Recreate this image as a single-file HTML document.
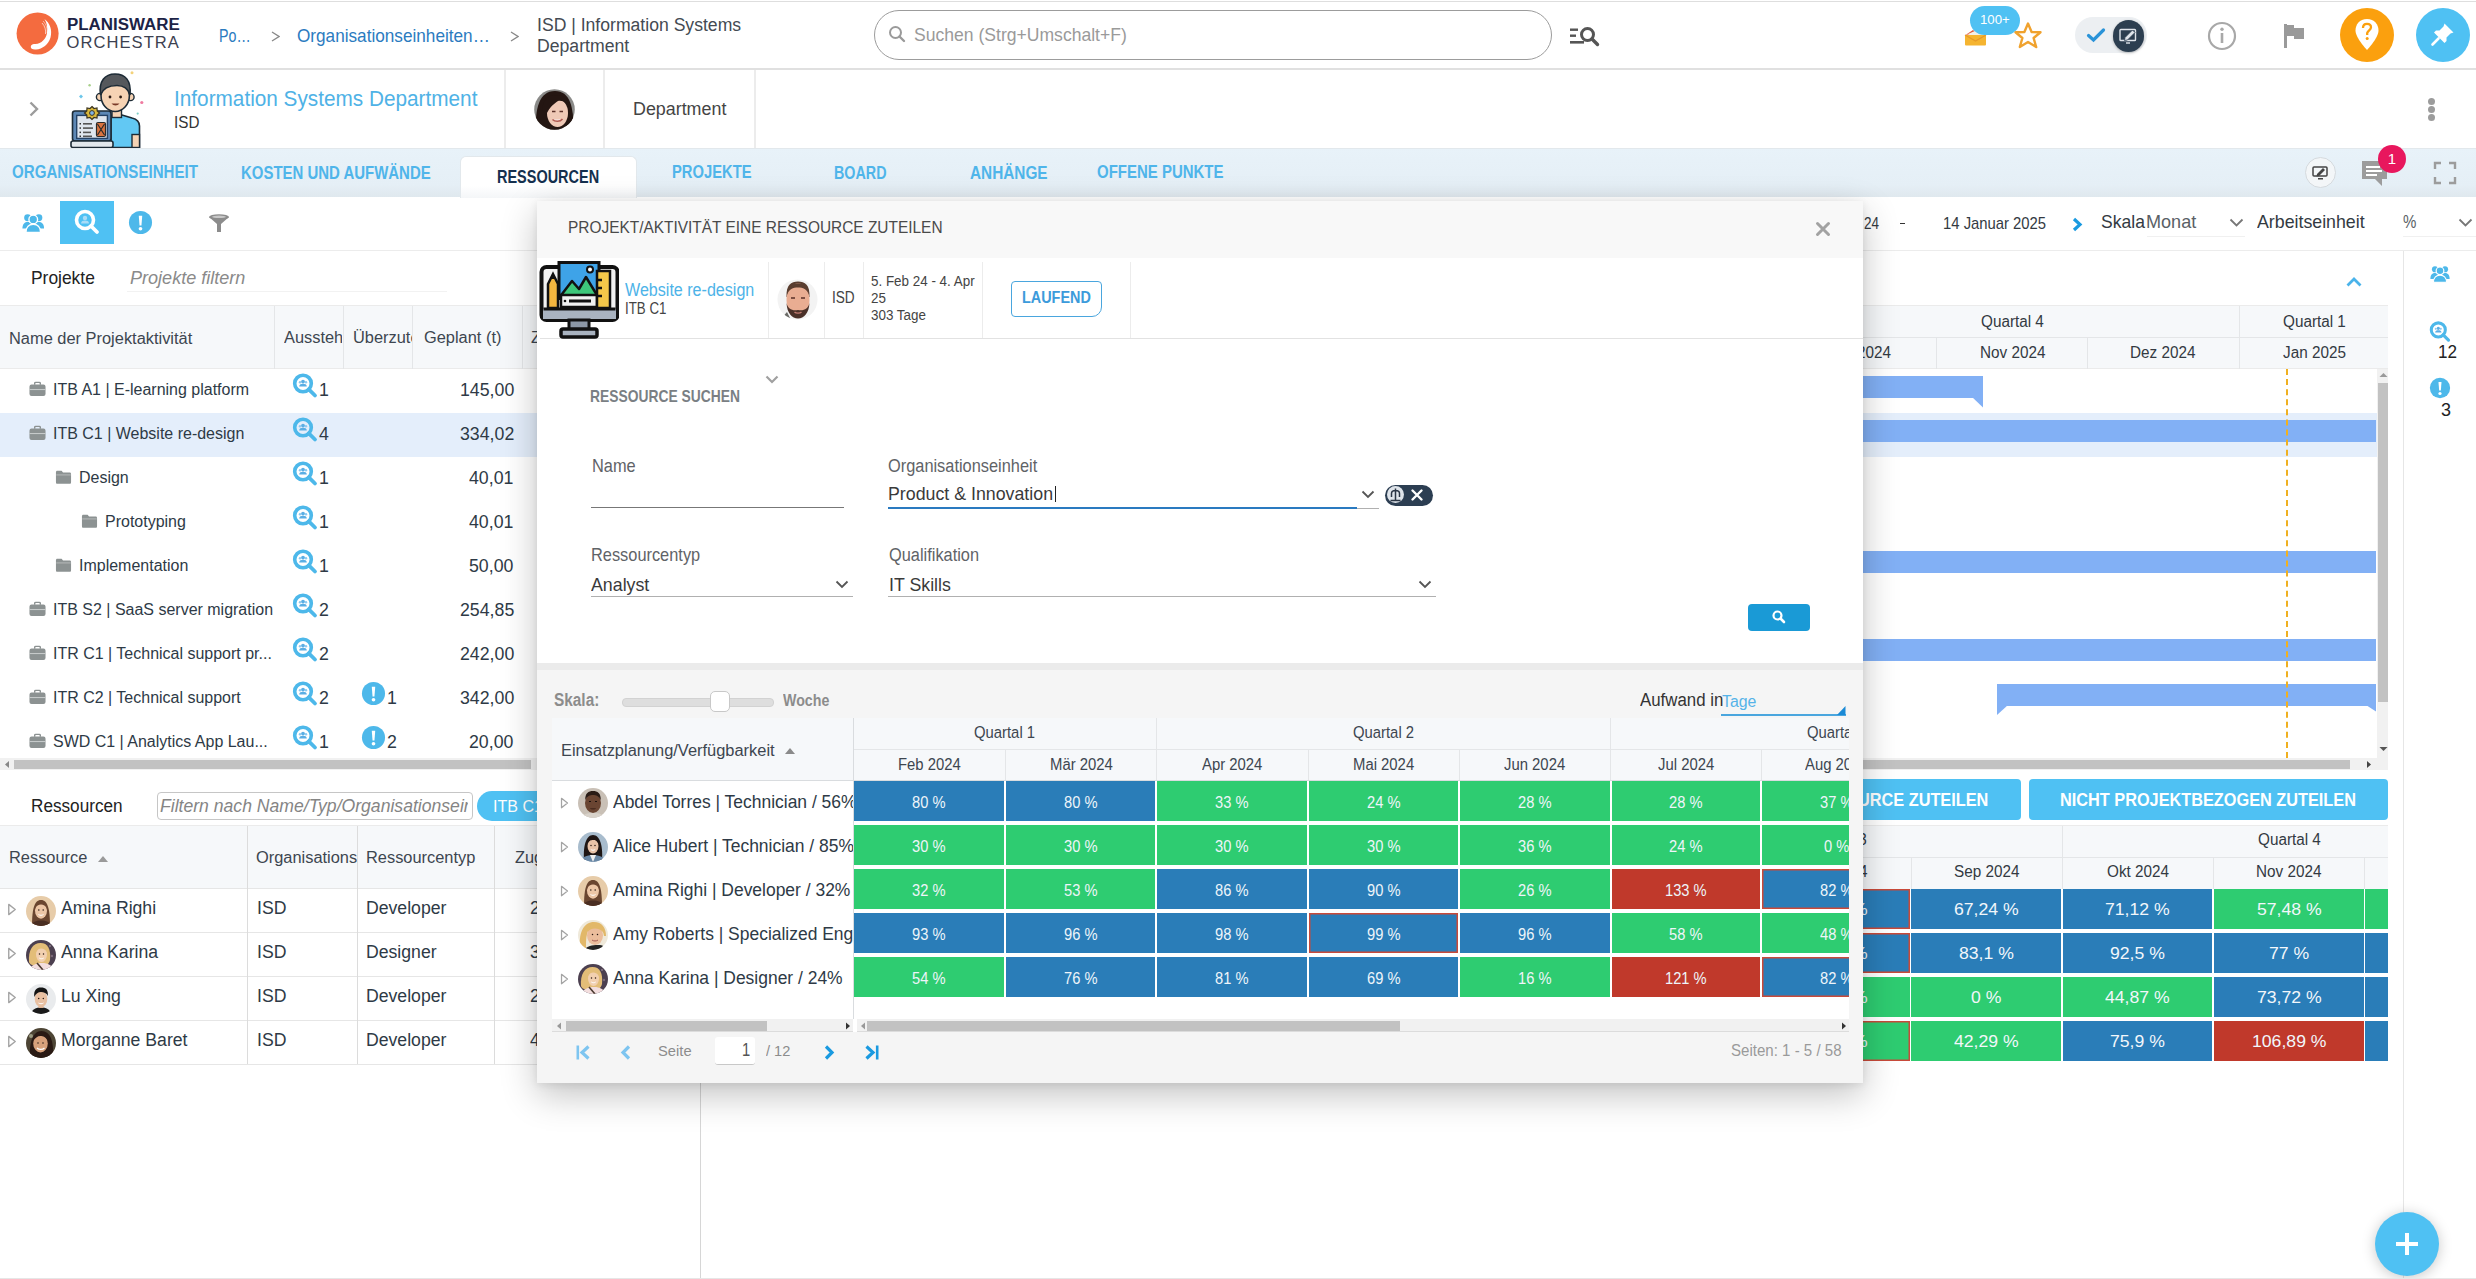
<!DOCTYPE html>
<html><head><meta charset="utf-8">
<style>
*{box-sizing:border-box;margin:0;padding:0}
html,body{width:2476px;height:1279px;overflow:hidden;background:#fff;font-family:"Liberation Sans",sans-serif;color:#333}
.a{position:absolute;white-space:nowrap;line-height:normal}
</style></head>
<body>
<div class="a" style="left:0;top:1px;width:2476px;height:1px;background:#dedede"></div>
<div class="a" style="left:0;top:68px;width:2476px;height:2px;background:#e0e0e0"></div>
<svg class="a" style="left:16px;top:12px" width="44" height="44" viewBox="0 0 44 44">
<circle cx="21.6" cy="21.5" r="21" fill="#f46b3f"/>
<path d="M28.5 7 C34 11 36.5 18 34.5 25.5 C32.5 32.5 26.5 37 20 37.5 C16.5 37.8 14.5 36.5 14.8 34.5 C15.1 32.6 17 32 19.5 32 C25.5 31.5 30 27 31 21 C31.8 15.5 30.8 10.5 28.5 7 Z" fill="#fff"/>
<path d="M26 11 C29 14 30 18 29.5 22" stroke="#fff" stroke-width="0.8" fill="none" opacity="0.8"/>
<path d="M27 9 C30.5 12.5 31.5 17 31 21" stroke="#fff" stroke-width="0.7" fill="none" opacity="0.7"/>
</svg>
<div class="a" style="left:66.6px;top:15.6px;font-size:15.80px;color:#1c2346;font-weight:bold;transform:scaleX(1.070);transform-origin:0 0;">PLANISWARE</div>
<div class="a" style="left:66.6px;top:32.7px;font-size:16.57px;color:#3c4150;letter-spacing:1.03px">ORCHESTRA</div>
<div class="a" style="left:218.7px;top:24.6px;font-size:18.84px;color:#2b7bbf;transform:scaleX(0.756);transform-origin:0 0;">Po…</div>
<svg class="a" style="left:271px;top:31px" width="9" height="11" viewBox="0 0 9 11"><path d="M1 1 L8 5.5 L1 10" stroke="#888" stroke-width="1.3" fill="none"/></svg>
<div class="a" style="left:297.0px;top:24.6px;font-size:18.84px;color:#2b7bbf;transform:scaleX(0.912);transform-origin:0 0;">Organisationseinheiten…</div>
<svg class="a" style="left:510px;top:31px" width="9" height="11" viewBox="0 0 9 11"><path d="M1 1 L8 5.5 L1 10" stroke="#888" stroke-width="1.3" fill="none"/></svg>
<div class="a" style="left:536.8px;top:14.7px;font-size:17.54px;color:#444a52;transform:scaleX(1.004);transform-origin:0 0;">ISD | Information Systems</div>
<div class="a" style="left:536.8px;top:35.7px;font-size:17.54px;color:#444a52;transform:scaleX(1.006);transform-origin:0 0;">Department</div>
<div class="a" style="left:874px;top:10px;width:678px;height:50px;border:1.5px solid #9c9c9c;border-radius:25px"></div>
<svg class="a" style="left:887px;top:24px" width="20" height="20" viewBox="0 0 20 20"><circle cx="8.5" cy="8.5" r="5.5" stroke="#9a9a9a" stroke-width="2" fill="none"/><path d="M12.5 12.5 L17 17" stroke="#9a9a9a" stroke-width="2.4" stroke-linecap="round"/></svg>
<div class="a" style="left:914.3px;top:23.9px;font-size:18.84px;color:#9a9a9a;transform:scaleX(0.933);transform-origin:0 0;">Suchen (Strg+Umschalt+F)</div>
<svg class="a" style="left:1568px;top:24px" width="34" height="24" viewBox="0 0 34 24"><rect x="2" y="4.5" width="8" height="2.4" fill="#555"/><rect x="2" y="10.5" width="6" height="2.4" fill="#555"/><rect x="2" y="17" width="14" height="2.6" fill="#555"/><circle cx="19.5" cy="10.5" r="6" stroke="#555" stroke-width="3" fill="none"/><path d="M24 15 L29.5 20.5" stroke="#555" stroke-width="3.4" stroke-linecap="round"/></svg>
<svg class="a" style="left:1964px;top:28px" width="24" height="19" viewBox="0 0 24 19"><path d="M1.5 7 L9 2 L13 5 Z" fill="#e0573a"/><path d="M4 6 L12 2.5 L18 6 L11 10 Z" fill="#f4efe6"/><rect x="1" y="7" width="21" height="10.5" rx="1" fill="#f5b430"/><path d="M1 7 L11.5 13 L22 7" stroke="#e79a28" stroke-width="1.2" fill="none"/></svg>
<div class="a" style="left:1970px;top:6px;width:50px;height:29px;border-radius:15px;background:#4fc1f3"></div>
<div class="a" style="left:1980.2px;top:12.4px;font-size:13.48px;color:#fff;transform:scaleX(0.980);transform-origin:0 0;">100+</div>
<svg class="a" style="left:2013px;top:21px" width="30" height="29" viewBox="0 0 30 29"><path d="M15 2.5 L18.6 11 L27.5 11.3 L20.6 17 L23.2 26 L15 21 L6.8 26 L9.4 17 L2.5 11.3 L11.4 11 Z" fill="none" stroke="#f0a22e" stroke-width="2.4" stroke-linejoin="round"/></svg>
<div class="a" style="left:2075px;top:17px;width:72px;height:36px;border-radius:18px;background:#eceff2"></div>
<svg class="a" style="left:2085px;top:26px" width="22" height="18" viewBox="0 0 22 18"><path d="M3.5 9.5 L8.5 14 L18.5 4" stroke="#2a93d8" stroke-width="3.2" fill="none" stroke-linecap="round"/></svg>
<div class="a" style="left:2112.5px;top:20px;width:31.5px;height:31.5px;border-radius:50%;background:#2c3e50;box-shadow:0 1px 3px rgba(0,0,0,0.25)"></div>
<svg class="a" style="left:2117px;top:24px" width="23" height="23" viewBox="0 0 23 23"><rect x="3" y="5.5" width="15.5" height="11" rx="0.8" fill="none" stroke="#dfe4ea" stroke-width="1.4"/><path d="M8 13.5 L15.5 6 L18 8.5 L10.5 16 L7.5 16.5 Z" fill="#dfe4ea" stroke="#2c3e50" stroke-width="0.8"/><rect x="9" y="18.3" width="4" height="1.4" fill="#dfe4ea"/></svg>
<svg class="a" style="left:2207px;top:21px" width="30" height="30" viewBox="0 0 30 30"><circle cx="15" cy="15" r="13" stroke="#a8a8a8" stroke-width="2.2" fill="none"/><rect x="13.7" y="12" width="2.6" height="10" fill="#a8a8a8"/><circle cx="15" cy="8.3" r="1.7" fill="#a8a8a8"/></svg>
<svg class="a" style="left:2281px;top:22px" width="26" height="28" viewBox="0 0 26 28"><rect x="3" y="2" width="3" height="24" fill="#9a9a9a"/><path d="M6 3 L13 3 L13 6 L23 6 L23 17 L13 17 L13 14 L6 14 Z" fill="#9a9a9a"/></svg>
<div class="a" style="left:2340px;top:8px;width:54px;height:54px;border-radius:50%;background:#fba00e"></div>
<svg class="a" style="left:2352px;top:17px" width="30" height="36" viewBox="0 0 30 36"><path d="M15 2 C7.5 2 3.5 7.5 3.5 13.5 C3.5 21 15 33 15 33 C15 33 26.5 21 26.5 13.5 C26.5 7.5 22.5 2 15 2 Z" fill="#fff"/><path d="M11 11 C11 8 13 6.8 15 6.8 C17.5 6.8 19 8.3 19 10.3 C19 12.8 15.8 13.5 15.2 16 L15.2 18" stroke="#fba00e" stroke-width="2.3" fill="none"/><circle cx="15.2" cy="21.5" r="1.5" fill="#fba00e"/></svg>
<div class="a" style="left:2416px;top:8px;width:54px;height:54px;border-radius:50%;background:#4fc1f3"></div>
<svg class="a" style="left:2429px;top:20px" width="28" height="28" viewBox="0 0 28 28"><path d="M15.5 3.5 L24.5 12.5 L21.5 13.5 L17.5 17.5 L17.5 21 L15.5 23 L5 12.5 L7 10.5 L10.5 10.5 L14.5 6.5 Z" fill="#fff"/><path d="M9.5 18.5 L3.5 24.5" stroke="#fff" stroke-width="2.6" stroke-linecap="round"/></svg>
<svg class="a" style="left:27px;top:100px" width="14" height="18" viewBox="0 0 14 18"><path d="M3.5 2.5 L10 9 L3.5 15.5" stroke="#9c9c9c" stroke-width="2.4" fill="none"/></svg>
<svg class="a" style="left:60px;top:68px" width="100" height="82" viewBox="0 0 100 82">
<circle cx="72" cy="4.8" r="1.5" fill="#f3d27a"/><circle cx="29.6" cy="17.3" r="1.2" fill="#a8d08a"/><path d="M19 28.5 L21 26.5 L23 28.5 L21 30.5 Z" fill="#6cc6ea"/><circle cx="81.8" cy="34.5" r="1.6" fill="#ef7ba0"/><circle cx="77.7" cy="45.6" r="1.1" fill="#7fd0c8"/>
<path d="M51 48 L52 47 L62 47 L72 50 C76 51 79.5 53 79.5 58 L79.5 79.5 L51 79.5 Z" fill="#62c8f3" stroke="#1d2b36" stroke-width="1.6"/>
<rect x="72" y="66.5" width="7.5" height="13" fill="#f6d3b4" stroke="#1d2b36" stroke-width="1.4"/>
<rect x="52" y="41" width="9.5" height="8.5" fill="#f6d3b4" stroke="#1d2b36" stroke-width="1.4"/>
<circle cx="40" cy="29" r="3.6" fill="#f6d3b4" stroke="#1d2b36" stroke-width="1.4"/><circle cx="70.5" cy="29" r="3.6" fill="#f6d3b4" stroke="#1d2b36" stroke-width="1.4"/>
<ellipse cx="55.2" cy="27.5" rx="14.2" ry="16" fill="#f6d3b4" stroke="#1d2b36" stroke-width="1.6"/>
<path d="M40.5 27 C38.5 13 45 6 55 6 C65 6 71.5 12 70 27 C68 20 64 17.5 57 17.5 C49 17.5 43 20 40.5 27 Z" fill="#55585c" stroke="#1d2b36" stroke-width="1.6"/>
<circle cx="50" cy="29" r="1.4" fill="#2a1a14"/><circle cx="60.6" cy="29" r="1.4" fill="#2a1a14"/>
<path d="M51.5 35.5 C53.5 38 57.5 38 59.5 35.5 Z" fill="#7a3a28"/>
<rect x="12.5" y="43" width="38.5" height="30" rx="2.5" fill="#5d88b6" stroke="#1d2b36" stroke-width="1.6"/>
<rect x="16.7" y="47.4" width="30.7" height="23" fill="#dfe6ee" stroke="#244266" stroke-width="1.4"/>
<rect x="19.5" y="55" width="1.5" height="1.5" fill="#333"/><rect x="23" y="55" width="9" height="1.6" fill="#555"/>
<rect x="19.5" y="59.3" width="1.5" height="1.5" fill="#333"/><rect x="23" y="59.3" width="10" height="1.6" fill="#555"/>
<rect x="19.5" y="63.6" width="1.5" height="1.5" fill="#333"/><rect x="23" y="63.6" width="8" height="1.6" fill="#555"/>
<rect x="19.5" y="67.5" width="1.5" height="1.5" fill="#333"/><rect x="23" y="67.5" width="9" height="1.6" fill="#555"/>
<rect x="36.5" y="54.5" width="9" height="14" rx="1.5" fill="#d9733f" stroke="#2a2a2a" stroke-width="1.2"/>
<path d="M37.5 56 L44.5 67 M44.5 56 L37.5 67" stroke="#2a2a2a" stroke-width="1.2"/>
<rect x="11" y="73" width="42" height="6.5" rx="2" fill="#e3e8ec" stroke="#1d2b36" stroke-width="1.6"/>
<path d="M32 38.5 L34 40.5 L37 40 L37.2 43 L39.5 45 L37.2 47 L37 50 L34 49.5 L32 51.5 L30 49.5 L27 50 L26.8 47 L24.5 45 L26.8 43 L27 40 L30 40.5 Z" fill="#d9b83c" stroke="#3a3420" stroke-width="1.2"/>
<circle cx="32" cy="45" r="2.4" fill="#7fb2e6" stroke="#3a3420" stroke-width="1"/>
</svg>
<div class="a" style="left:174.4px;top:85.6px;font-size:21.88px;color:#4fb2e6;transform:scaleX(0.949);transform-origin:0 0;">Information Systems Department</div>
<div class="a" style="left:174.4px;top:111.7px;font-size:17.39px;color:#333;transform:scaleX(0.877);transform-origin:0 0;">ISD</div>
<div class="a" style="left:504px;top:70px;width:2px;height:78px;background:#ececec"></div>
<div class="a" style="left:603px;top:70px;width:2px;height:78px;background:#ececec"></div>
<div class="a" style="left:754px;top:70px;width:2px;height:78px;background:#ececec"></div>
<svg class="a" style="left:534px;top:89px" width="41" height="41" viewBox="0 0 41 41"><defs><clipPath id="cf1"><circle cx="20.5" cy="20.5" r="20.3"/></clipPath></defs><g clip-path="url(#cf1)"><rect width="41" height="41" fill="#8a8a88"/>
<path d="M2 41 C1 20 5 2 21 2 C36 2 40 18 39 41 Z" fill="#241612"/>
<ellipse cx="23.5" cy="24" rx="10.5" ry="14" fill="#efc9b6"/>
<path d="M8 22 C9 10 14 6 22 6 C30 6 35 10 35 20 C33 14 29 11 24 12 C20 15 16 17 12 26 Z" fill="#241612"/>
<path d="M34 16 C36 24 35 34 30 41 L38 41 C40 30 39 20 34 16 Z" fill="#241612"/>
<path d="M18.5 30.5 C21 33 26 33 28.5 30" stroke="#b05a50" stroke-width="1.6" fill="#f6e0dc"/>
<path d="M18 22.5 L21.5 22.5 M25.5 22.5 L29 22.5" stroke="#5a3028" stroke-width="1.3"/>
</g></svg>
<div class="a" style="left:632.6px;top:98.0px;font-size:18.70px;color:#444;transform:scaleX(0.956);transform-origin:0 0;">Department</div>
<div class="a" style="left:2428px;top:98px;width:7px;height:7px;border-radius:50%;background:#9c9c9c"></div>
<div class="a" style="left:2428px;top:106px;width:7px;height:7px;border-radius:50%;background:#9c9c9c"></div>
<div class="a" style="left:2428px;top:114px;width:7px;height:7px;border-radius:50%;background:#9c9c9c"></div>
<div class="a" style="left:0;top:148px;width:2476px;height:49px;background:linear-gradient(#e8f2f9,#e5eff6 75%,#dfe8ee)"></div>
<div class="a" style="left:0;top:147.5px;width:2476px;height:1px;background:#e2e8ec"></div>
<div class="a" style="left:459.5px;top:155.5px;width:177px;height:42px;background:linear-gradient(#fff 70%,#f4f6f8);border:1px solid #e2e8ec;border-bottom:none;border-radius:6px 6px 0 0"></div>
<div class="a" style="left:12.4px;top:162.1px;font-size:17.97px;color:#4fb5ea;font-weight:bold;transform:scaleX(0.841);transform-origin:0 0;">ORGANISATIONSEINHEIT</div>
<div class="a" style="left:241.0px;top:163.4px;font-size:17.97px;color:#4fb5ea;font-weight:bold;transform:scaleX(0.833);transform-origin:0 0;">KOSTEN UND AUFWÄNDE</div>
<div class="a" style="left:496.8px;top:165.7px;font-size:18.26px;color:#15304e;font-weight:bold;transform:scaleX(0.793);transform-origin:0 0;">RESSOURCEN</div>
<div class="a" style="left:671.8px;top:162.4px;font-size:17.83px;color:#4fb5ea;font-weight:bold;transform:scaleX(0.827);transform-origin:0 0;">PROJEKTE</div>
<div class="a" style="left:833.7px;top:163.2px;font-size:17.68px;color:#4fb5ea;font-weight:bold;transform:scaleX(0.810);transform-origin:0 0;">BOARD</div>
<div class="a" style="left:969.8px;top:163.2px;font-size:17.68px;color:#4fb5ea;font-weight:bold;transform:scaleX(0.868);transform-origin:0 0;">ANHÄNGE</div>
<div class="a" style="left:1096.6px;top:162.4px;font-size:17.83px;color:#4fb5ea;font-weight:bold;transform:scaleX(0.840);transform-origin:0 0;">OFFENE PUNKTE</div>
<div class="a" style="left:2305px;top:157px;width:31px;height:31px;border-radius:50%;background:#f3f6f8;border:1px solid #d5dade"></div>
<svg class="a" style="left:2310px;top:162px" width="21" height="21" viewBox="0 0 21 21"><rect x="3" y="5" width="14" height="9" rx="1" fill="none" stroke="#444" stroke-width="1.5"/><path d="M7 12 L13 6 L15 8 L9 14 L6.5 14.5 Z" fill="#444"/><rect x="8" y="16" width="5" height="1.5" fill="#444"/></svg>
<svg class="a" style="left:2360px;top:158px" width="30" height="30" viewBox="0 0 30 30"><path d="M2 3 L27 3 L27 21 L22 21 L22 28 L15 21 L2 21 Z" fill="#9c9c9c"/><rect x="6" y="8" width="14" height="2" fill="#fff"/><rect x="6" y="12" width="16" height="2" fill="#fff"/><rect x="6" y="16" width="11" height="2" fill="#fff"/></svg>
<div class="a" style="left:2378px;top:145px;width:28px;height:28px;border-radius:50%;background:#e8175d;color:#fff;font-size:15px;line-height:28px;text-align:center">1</div>
<svg class="a" style="left:2433px;top:161px" width="24" height="24" viewBox="0 0 24 24"><path d="M2 8 L2 2 L8 2 M16 2 L22 2 L22 8 M22 16 L22 22 L16 22 M8 22 L2 22 L2 16" stroke="#9c9c9c" stroke-width="2.4" fill="none"/></svg>
<svg width="0" height="0" style="position:absolute">
<defs>
<symbol id="sp" viewBox="0 0 26 26"><circle cx="11" cy="10.5" r="8.3" stroke="#4db8ea" stroke-width="3.6" fill="none"/><path d="M16.8 16.3 L23 22.5" stroke="#4db8ea" stroke-width="3.8" stroke-linecap="round"/><circle cx="11" cy="8.6" r="1.9" fill="#5aaee4"/><path d="M7.2 13.6 C7.2 11.4 9 10.8 11 10.8 C13 10.8 14.8 11.4 14.8 13.6 Z" fill="#5aaee4"/><circle cx="8" cy="9.3" r="1.2" fill="#8ccaf0"/><circle cx="14" cy="9.3" r="1.2" fill="#8ccaf0"/></symbol>
<symbol id="ex" viewBox="0 0 26 26"><circle cx="13" cy="13" r="12" fill="#4db8ea"/><path d="M11.2 6 L14.8 6 L14 16 L12 16 Z" fill="#fff"/><circle cx="13" cy="19.5" r="1.9" fill="#fff"/></symbol>
<symbol id="bc" viewBox="0 0 18 16"><path d="M6 3.5 L6 2 C6 1.2 6.5 0.8 7.2 0.8 L10.8 0.8 C11.5 0.8 12 1.2 12 2 L12 3.5" stroke="#8c9292" stroke-width="1.5" fill="none"/><rect x="0.5" y="3.3" width="17" height="12.2" rx="2.2" fill="#8c9292"/><path d="M0.5 8.6 L17.5 8.6" stroke="#cfd2d2" stroke-width="1"/></symbol>
<symbol id="fd" viewBox="0 0 18 16"><path d="M1 3 C1 2 1.5 1.3 2.5 1.3 L7 1.3 L8.5 3.3 L15.5 3.3 C16.5 3.3 17 4 17 5 L17 13.5 C17 14.7 16.5 15.2 15.5 15.2 L2.5 15.2 C1.5 15.2 1 14.7 1 13.5 Z" fill="#8c9292"/><path d="M1.3 5.8 L16.7 5.8" stroke="#b9bdbd" stroke-width="1"/></symbol>
<symbol id="ppl" viewBox="0 0 26 24"><circle cx="6.5" cy="6.5" r="4" fill="#4db8ea"/><circle cx="19.5" cy="6.5" r="4" fill="#4db8ea"/><path d="M0.5 19 C0.5 13.5 3.5 11.5 6.5 11.5 C9.5 11.5 12 13 12 17 L12 19 Z" fill="#4db8ea"/><path d="M25.5 19 C25.5 13.5 22.5 11.5 19.5 11.5 C16.5 11.5 14 13 14 17 L14 19 Z" fill="#4db8ea"/><path d="M4.5 23.5 C4.5 17 8.5 14 13 14 C17.5 14 21.5 17 21.5 23.5 Z" fill="#4db8ea" stroke="#fff" stroke-width="1.6"/><circle cx="13" cy="8.5" r="5" fill="#4db8ea" stroke="#fff" stroke-width="1.6"/></symbol>
<symbol id="tri" viewBox="0 0 10 14"><path d="M1.5 1.5 L8.5 7 L1.5 12.5 Z" fill="none" stroke="#a4a4a4" stroke-width="1.5" stroke-linejoin="round"/></symbol>
</defs></svg>
<svg class="a" style="left:22px;top:212px" width="22.5" height="21" viewBox="0 0 26 24"><use href="#ppl"/></svg>
<div class="a" style="left:60px;top:201px;width:54px;height:43px;background:#4fc1f3"></div>
<svg class="a" style="left:73px;top:208px" width="28" height="28" viewBox="0 0 28 28"><circle cx="12" cy="12" r="8.5" stroke="#fff" stroke-width="3.6" fill="none"/><path d="M18 18 L24 24" stroke="#fff" stroke-width="3.8" stroke-linecap="round"/><circle cx="12" cy="10" r="2.2" fill="#a9dcf7"/><path d="M8 15.5 C8 13 10 12.4 12 12.4 C14 12.4 16 13 16 15.5 Z" fill="#a9dcf7"/></svg>
<svg class="a" style="left:128px;top:210px" width="25" height="25"><use href="#ex"/></svg>
<svg class="a" style="left:207px;top:213px" width="24" height="20" viewBox="0 0 24 20"><ellipse cx="12" cy="4" rx="10" ry="2.8" fill="#8c8c8c"/><path d="M2 4 L10 11 L10 19 L14 19 L14 11 L22 4 Z" fill="#8c8c8c"/><ellipse cx="12" cy="3.8" rx="7" ry="1.2" fill="#c8c8c8"/></svg>
<div class="a" style="left:0;top:250px;width:537px;height:1px;background:#ececec"></div>
<div class="a" style="left:30.5px;top:266.9px;font-size:18.55px;color:#222;transform:scaleX(0.939);transform-origin:0 0;">Projekte</div>
<div class="a" style="left:130.0px;top:266.9px;font-size:18.55px;color:#8a8a8a;font-style:italic;transform:scaleX(0.974);transform-origin:0 0;">Projekte filtern</div>
<div class="a" style="left:127px;top:291px;width:320px;height:1px;background:#f2f2f2"></div>
<div class="a" style="left:0;top:305px;width:537px;height:64px;background:#f6f8fa;border-top:1px solid #ebebeb;border-bottom:1px solid #ebebeb"></div>
<div class="a" style="left:9.0px;top:327.5px;font-size:17.25px;color:#3d4650;transform:scaleX(0.951);transform-origin:0 0;">Name der Projektaktivität</div>
<div class="a" style="left:283px;top:320px;width:59px;height:30px;overflow:hidden"><div class="a" style="left:0.5px;top:7.2px;font-size:17.25px;color:#3d4650;transform:scaleX(0.950);transform-origin:0 0;">Ausstehend</div></div>
<div class="a" style="left:352px;top:320px;width:60px;height:30px;overflow:hidden"><div class="a" style="left:0.6px;top:7.2px;font-size:17.25px;color:#3d4650;transform:scaleX(0.950);transform-origin:0 0;">Überzuteilen</div></div>
<div class="a" style="left:423.8px;top:327.2px;font-size:17.25px;color:#3d4650;transform:scaleX(0.950);transform-origin:0 0;">Geplant (t)</div>
<div class="a" style="left:531.0px;top:327.2px;font-size:17.25px;color:#3d4650;transform:scaleX(0.950);transform-origin:0 0;">Zugeteilt</div>
<div class="a" style="left:274px;top:306px;width:1px;height:63px;background:#e4e6e8"></div>
<div class="a" style="left:343px;top:306px;width:1px;height:63px;background:#e4e6e8"></div>
<div class="a" style="left:412px;top:306px;width:1px;height:63px;background:#e4e6e8"></div>
<div class="a" style="left:522px;top:306px;width:1px;height:63px;background:#e4e6e8"></div>
<svg class="a" style="left:28.5px;top:381px" width="17" height="16" viewBox="0 0 18 16"><use href="#bc"/></svg>
<div class="a" style="left:53.3px;top:379.4px;font-size:17.30px;color:#2e3a46;transform:scaleX(0.925);transform-origin:0 0;">ITB A1 | E-learning platform</div>
<svg class="a" style="left:292px;top:373px" width="26" height="26"><use href="#sp"/></svg>
<div class="a" style="left:318.7px;top:379.3px;font-size:18.30px;color:#2e3a46;transform:scaleX(0.970);transform-origin:0 0;">1</div>
<div class="a" style="left:459.5px;top:379.3px;font-size:18.30px;color:#2e3a46;transform:scaleX(0.970);transform-origin:0 0;">145,00</div>
<div class="a" style="left:0;top:412.5px;width:537px;height:44px;background:#e4eefb"></div>
<svg class="a" style="left:28.5px;top:425px" width="17" height="16" viewBox="0 0 18 16"><use href="#bc"/></svg>
<div class="a" style="left:53.3px;top:423.4px;font-size:17.30px;color:#2e3a46;transform:scaleX(0.925);transform-origin:0 0;">ITB C1 | Website re-design</div>
<svg class="a" style="left:292px;top:417px" width="26" height="26"><use href="#sp"/></svg>
<div class="a" style="left:318.7px;top:423.3px;font-size:18.30px;color:#2e3a46;transform:scaleX(0.970);transform-origin:0 0;">4</div>
<div class="a" style="left:459.5px;top:423.3px;font-size:18.30px;color:#2e3a46;transform:scaleX(0.970);transform-origin:0 0;">334,02</div>
<svg class="a" style="left:54.5px;top:469px" width="17" height="16" viewBox="0 0 18 16"><use href="#fd"/></svg>
<div class="a" style="left:79.3px;top:467.4px;font-size:17.30px;color:#2e3a46;transform:scaleX(0.925);transform-origin:0 0;">Design</div>
<svg class="a" style="left:292px;top:461px" width="26" height="26"><use href="#sp"/></svg>
<div class="a" style="left:318.7px;top:467.3px;font-size:18.30px;color:#2e3a46;transform:scaleX(0.970);transform-origin:0 0;">1</div>
<div class="a" style="left:469.3px;top:467.3px;font-size:18.30px;color:#2e3a46;transform:scaleX(0.970);transform-origin:0 0;">40,01</div>
<svg class="a" style="left:80.5px;top:513px" width="17" height="16" viewBox="0 0 18 16"><use href="#fd"/></svg>
<div class="a" style="left:105.3px;top:511.4px;font-size:17.30px;color:#2e3a46;transform:scaleX(0.925);transform-origin:0 0;">Prototyping</div>
<svg class="a" style="left:292px;top:505px" width="26" height="26"><use href="#sp"/></svg>
<div class="a" style="left:318.7px;top:511.3px;font-size:18.30px;color:#2e3a46;transform:scaleX(0.970);transform-origin:0 0;">1</div>
<div class="a" style="left:469.3px;top:511.3px;font-size:18.30px;color:#2e3a46;transform:scaleX(0.970);transform-origin:0 0;">40,01</div>
<svg class="a" style="left:54.5px;top:557px" width="17" height="16" viewBox="0 0 18 16"><use href="#fd"/></svg>
<div class="a" style="left:79.3px;top:555.4px;font-size:17.30px;color:#2e3a46;transform:scaleX(0.925);transform-origin:0 0;">Implementation</div>
<svg class="a" style="left:292px;top:549px" width="26" height="26"><use href="#sp"/></svg>
<div class="a" style="left:318.7px;top:555.3px;font-size:18.30px;color:#2e3a46;transform:scaleX(0.970);transform-origin:0 0;">1</div>
<div class="a" style="left:469.3px;top:555.3px;font-size:18.30px;color:#2e3a46;transform:scaleX(0.970);transform-origin:0 0;">50,00</div>
<svg class="a" style="left:28.5px;top:601px" width="17" height="16" viewBox="0 0 18 16"><use href="#bc"/></svg>
<div class="a" style="left:53.3px;top:599.4px;font-size:17.30px;color:#2e3a46;transform:scaleX(0.925);transform-origin:0 0;">ITB S2 | SaaS server migration</div>
<svg class="a" style="left:292px;top:593px" width="26" height="26"><use href="#sp"/></svg>
<div class="a" style="left:318.7px;top:599.3px;font-size:18.30px;color:#2e3a46;transform:scaleX(0.970);transform-origin:0 0;">2</div>
<div class="a" style="left:459.5px;top:599.3px;font-size:18.30px;color:#2e3a46;transform:scaleX(0.970);transform-origin:0 0;">254,85</div>
<svg class="a" style="left:28.5px;top:645px" width="17" height="16" viewBox="0 0 18 16"><use href="#bc"/></svg>
<div class="a" style="left:53.3px;top:643.4px;font-size:17.30px;color:#2e3a46;transform:scaleX(0.925);transform-origin:0 0;">ITR C1 | Technical support pr...</div>
<svg class="a" style="left:292px;top:637px" width="26" height="26"><use href="#sp"/></svg>
<div class="a" style="left:318.7px;top:643.3px;font-size:18.30px;color:#2e3a46;transform:scaleX(0.970);transform-origin:0 0;">2</div>
<div class="a" style="left:459.5px;top:643.3px;font-size:18.30px;color:#2e3a46;transform:scaleX(0.970);transform-origin:0 0;">242,00</div>
<svg class="a" style="left:28.5px;top:689px" width="17" height="16" viewBox="0 0 18 16"><use href="#bc"/></svg>
<div class="a" style="left:53.3px;top:687.4px;font-size:17.30px;color:#2e3a46;transform:scaleX(0.925);transform-origin:0 0;">ITR C2 | Technical support</div>
<svg class="a" style="left:292px;top:681px" width="26" height="26"><use href="#sp"/></svg>
<div class="a" style="left:318.7px;top:687.3px;font-size:18.30px;color:#2e3a46;transform:scaleX(0.970);transform-origin:0 0;">2</div>
<svg class="a" style="left:360.5px;top:681px" width="25" height="25" viewBox="0 0 26 26"><use href="#ex"/></svg>
<div class="a" style="left:387.0px;top:687.3px;font-size:18.30px;color:#2e3a46;transform:scaleX(0.970);transform-origin:0 0;">1</div>
<div class="a" style="left:459.5px;top:687.3px;font-size:18.30px;color:#2e3a46;transform:scaleX(0.970);transform-origin:0 0;">342,00</div>
<svg class="a" style="left:28.5px;top:733px" width="17" height="16" viewBox="0 0 18 16"><use href="#bc"/></svg>
<div class="a" style="left:53.3px;top:731.4px;font-size:17.30px;color:#2e3a46;transform:scaleX(0.925);transform-origin:0 0;">SWD C1 | Analytics App Lau...</div>
<svg class="a" style="left:292px;top:725px" width="26" height="26"><use href="#sp"/></svg>
<div class="a" style="left:318.7px;top:731.3px;font-size:18.30px;color:#2e3a46;transform:scaleX(0.970);transform-origin:0 0;">1</div>
<svg class="a" style="left:360.5px;top:725px" width="25" height="25" viewBox="0 0 26 26"><use href="#ex"/></svg>
<div class="a" style="left:387.0px;top:731.3px;font-size:18.30px;color:#2e3a46;transform:scaleX(0.970);transform-origin:0 0;">2</div>
<div class="a" style="left:469.3px;top:731.3px;font-size:18.30px;color:#2e3a46;transform:scaleX(0.970);transform-origin:0 0;">20,00</div>
<div class="a" style="left:0;top:758px;width:537px;height:12px;background:#f1f1f1"></div>
<div class="a" style="left:14px;top:759.5px;width:517px;height:9px;background:#c2c2c2"></div>
<svg class="a" style="left:3px;top:760px" width="8" height="9"><path d="M6 1 L2 4.5 L6 8 Z" fill="#888"/></svg>
<div class="a" style="left:30.5px;top:795.9px;font-size:17.68px;color:#222;transform:scaleX(0.971);transform-origin:0 0;">Ressourcen</div>
<div class="a" style="left:157px;top:792px;width:316px;height:28px;border:1px solid #c6c6c6;border-radius:4px;background:#fff"></div>
<div class="a" style="left:158px;top:793px;width:310px;height:26px;overflow:hidden"><div class="a" style="left:2.0px;top:3.0px;font-size:17.60px;color:#858585;font-style:italic;">Filtern nach Name/Typ/Organisationseinheit</div></div>
<div class="a" style="left:477px;top:791px;width:90px;height:30px;border-radius:15px;background:#4fc1f3"></div>
<div class="a" style="left:493.0px;top:796.2px;font-size:17.30px;color:#fff;transform:scaleX(0.930);transform-origin:0 0;">ITB C1</div>
<div class="a" style="left:0;top:825px;width:537px;height:64px;background:#f6f8fa;border-top:1px solid #ebebeb;border-bottom:1px solid #e6e6e6"></div>
<div class="a" style="left:9.0px;top:847.4px;font-size:17.25px;color:#3d4650;transform:scaleX(0.950);transform-origin:0 0;">Ressource</div>
<svg class="a" style="left:97px;top:855px" width="12" height="8"><path d="M1 7 L6 1 L11 7 Z" fill="#9a9a9a"/></svg>
<div class="a" style="left:250px;top:840px;width:107px;height:30px;overflow:hidden"><div class="a" style="left:6.0px;top:7.4px;font-size:17.25px;color:#3d4650;transform:scaleX(0.950);transform-origin:0 0;">Organisationseinheit</div></div>
<div class="a" style="left:366.2px;top:847.4px;font-size:17.25px;color:#3d4650;transform:scaleX(0.950);transform-origin:0 0;">Ressourcentyp</div>
<div class="a" style="left:514.6px;top:847.4px;font-size:17.25px;color:#3d4650;transform:scaleX(0.950);transform-origin:0 0;">Zugeteilt</div>
<div class="a" style="left:0;top:932px;width:537px;height:1px;background:#e6e6e6"></div>
<svg class="a" style="left:7px;top:902.7px" width="10" height="13" viewBox="0 0 10 14"><use href="#tri"/></svg>
<svg class="a" style="left:26px;top:896.4px" width="30" height="30" viewBox="0 0 30 30"><defs><clipPath id="av26_896"><circle cx="15" cy="15" r="15"/></clipPath></defs><g clip-path="url(#av26_896)"><rect width="30" height="30" fill="#e7cca9"/><path d="M6 30 C6 14 8 4 15 4 C22 4 24 14 24 30 Z" fill="#6a4630"/><path d="M5 30 C6 26 10 24.5 15 24.5 C20 24.5 24 26 25 30 Z" fill="#4a2e22"/><ellipse cx="15" cy="14.5" rx="6" ry="8.3" fill="#ecc6a6"/><path d="M9 13 C9 7 11.5 5.5 15 5.5 C18.5 5.5 21 7 21 13 C19.5 9.5 17.5 8.5 15 8.5 C12.5 8.5 10.5 9.5 9 13 Z" fill="#6a4630"/><path d="M12.5 18.5 C14 19.6 16 19.6 17.5 18.5" stroke="#fff" stroke-width="1" fill="none"/><circle cx="12.8" cy="14" r="0.75" fill="#2a1a14"/><circle cx="17.2" cy="14" r="0.75" fill="#2a1a14"/></g></svg>
<div class="a" style="left:61.0px;top:897.6px;font-size:18.00px;color:#2e3a46;transform:scaleX(0.980);transform-origin:0 0;">Amina Righi</div>
<div class="a" style="left:256.7px;top:898.2px;font-size:18.00px;color:#2e3a46;transform:scaleX(0.980);transform-origin:0 0;">ISD</div>
<div class="a" style="left:366.2px;top:898.2px;font-size:18.00px;color:#2e3a46;transform:scaleX(0.980);transform-origin:0 0;">Developer</div>
<div class="a" style="left:529.5px;top:898.2px;font-size:18.00px;color:#2e3a46;transform:scaleX(0.980);transform-origin:0 0;">2</div>
<div class="a" style="left:0;top:976px;width:537px;height:1px;background:#e6e6e6"></div>
<svg class="a" style="left:7px;top:946.7px" width="10" height="13" viewBox="0 0 10 14"><use href="#tri"/></svg>
<svg class="a" style="left:26px;top:940.4px" width="30" height="30" viewBox="0 0 30 30"><defs><clipPath id="av26_940"><circle cx="15" cy="15" r="15"/></clipPath></defs><g clip-path="url(#av26_940)"><rect width="30" height="30" fill="#4c4050"/><circle cx="24" cy="6" r="1" fill="#8a7a8a"/><circle cx="26" cy="16" r="1.2" fill="#7a6a7a"/><path d="M3 22 C2 10 7 3 14.5 3 C22 3 25 9 24 20 C23 24 20 26 16 26 C10 26 4 26 3 22 Z" fill="#e3bd78"/><path d="M4 30 C5 25 10 23 16 23 C22 23 26 25 27 30 Z" fill="#f3dede"/><path d="M11 23 L17 30" stroke="#4a3a30" stroke-width="1.6"/><ellipse cx="15.5" cy="14.5" rx="5.5" ry="7.5" fill="#f2d0b0"/><path d="M10 12 C10 7 12 6 15.5 6 C19 6 21 8 21 12 C19 9 17 8.5 15.5 8.5 C13 8.5 11.5 9.5 10 12 Z" fill="#e3bd78"/><path d="M13.3 18 C14.5 19 16.5 19 17.7 18" stroke="#fff" stroke-width="1" fill="none"/><circle cx="13.5" cy="14" r="0.75" fill="#2a1a14"/><circle cx="17.5" cy="14" r="0.75" fill="#2a1a14"/></g></svg>
<div class="a" style="left:61.0px;top:941.6px;font-size:18.00px;color:#2e3a46;transform:scaleX(0.980);transform-origin:0 0;">Anna Karina</div>
<div class="a" style="left:256.7px;top:942.2px;font-size:18.00px;color:#2e3a46;transform:scaleX(0.980);transform-origin:0 0;">ISD</div>
<div class="a" style="left:366.2px;top:942.2px;font-size:18.00px;color:#2e3a46;transform:scaleX(0.980);transform-origin:0 0;">Designer</div>
<div class="a" style="left:529.5px;top:942.2px;font-size:18.00px;color:#2e3a46;transform:scaleX(0.980);transform-origin:0 0;">3</div>
<div class="a" style="left:0;top:1020px;width:537px;height:1px;background:#e6e6e6"></div>
<svg class="a" style="left:7px;top:990.7px" width="10" height="13" viewBox="0 0 10 14"><use href="#tri"/></svg>
<svg class="a" style="left:26px;top:984.4px" width="30" height="30" viewBox="0 0 30 30"><defs><clipPath id="av26_984"><circle cx="15" cy="15" r="15"/></clipPath></defs><g clip-path="url(#av26_984)"><rect width="30" height="30" fill="#e9ebed"/><path d="M5 30 C6 25 10 23.5 15 23.5 C20 23.5 24 25 25 30 Z" fill="#1a1a1a"/><rect x="12.5" y="19" width="5" height="5" fill="#dfb596"/><ellipse cx="15" cy="15" rx="6.3" ry="8" fill="#e8c0a2"/><path d="M8.3 13 C7.5 6 10.5 3.5 15 3.5 C19.5 3.5 22.5 5.5 21.8 12 C20.5 9 18 8 15 8 C12 8 10 9.5 8.3 13 Z" fill="#141414"/><path d="M12.5 19 C14 20 16 20 17.5 19" stroke="#fff" stroke-width="1" fill="none"/><circle cx="12.7" cy="14.5" r="0.75" fill="#2a1a14"/><circle cx="17.3" cy="14.5" r="0.75" fill="#2a1a14"/></g></svg>
<div class="a" style="left:61.0px;top:985.6px;font-size:18.00px;color:#2e3a46;transform:scaleX(0.980);transform-origin:0 0;">Lu Xing</div>
<div class="a" style="left:256.7px;top:986.2px;font-size:18.00px;color:#2e3a46;transform:scaleX(0.980);transform-origin:0 0;">ISD</div>
<div class="a" style="left:366.2px;top:986.2px;font-size:18.00px;color:#2e3a46;transform:scaleX(0.980);transform-origin:0 0;">Developer</div>
<div class="a" style="left:529.5px;top:986.2px;font-size:18.00px;color:#2e3a46;transform:scaleX(0.980);transform-origin:0 0;">2</div>
<div class="a" style="left:0;top:1064px;width:537px;height:1px;background:#e6e6e6"></div>
<svg class="a" style="left:7px;top:1034.7px" width="10" height="13" viewBox="0 0 10 14"><use href="#tri"/></svg>
<svg class="a" style="left:26px;top:1028.4px" width="30" height="30" viewBox="0 0 30 30"><defs><clipPath id="av26_1028"><circle cx="15" cy="15" r="15"/></clipPath></defs><g clip-path="url(#av26_1028)"><rect width="30" height="30" fill="#4d4535"/><path d="M4 30 C3 14 7 3 15.5 3 C24 3 28 12 27 30 Z" fill="#2a1a14"/><ellipse cx="14.5" cy="15.5" rx="7.3" ry="9" fill="#d8a27c"/><path d="M7 13 C8 6 11 4.5 15 4.5 C20 4.5 23 7 22 13 C20 9 17 8 14.5 8 C11.5 8 9 10 7 13 Z" fill="#2a1a14"/><path d="M11 20 C13 21.8 16.5 21.8 18.5 20" stroke="#fff" stroke-width="1.2" fill="none"/><circle cx="5" cy="8" r="2" fill="#9a9a80"/><circle cx="12" cy="15" r="0.75" fill="#2a1a14"/><circle cx="17" cy="15" r="0.75" fill="#2a1a14"/></g></svg>
<div class="a" style="left:61.0px;top:1029.6px;font-size:18.00px;color:#2e3a46;transform:scaleX(0.980);transform-origin:0 0;">Morganne Baret</div>
<div class="a" style="left:256.7px;top:1030.2px;font-size:18.00px;color:#2e3a46;transform:scaleX(0.980);transform-origin:0 0;">ISD</div>
<div class="a" style="left:366.2px;top:1030.2px;font-size:18.00px;color:#2e3a46;transform:scaleX(0.980);transform-origin:0 0;">Developer</div>
<div class="a" style="left:529.5px;top:1030.2px;font-size:18.00px;color:#2e3a46;transform:scaleX(0.980);transform-origin:0 0;">4</div>
<div class="a" style="left:247px;top:826px;width:1px;height:238px;background:#dcdcdc"></div>
<div class="a" style="left:357px;top:826px;width:1px;height:238px;background:#dcdcdc"></div>
<div class="a" style="left:494px;top:826px;width:1px;height:238px;background:#dcdcdc"></div>
<div class="a" style="left:700px;top:1064px;width:1px;height:215px;background:#d6d6d6"></div>
<div class="a" style="left:2403px;top:250px;width:1px;height:1029px;background:#e6e6e6"></div>
<div class="a" style="left:1863.7px;top:213.8px;font-size:16.96px;color:#333a42;transform:scaleX(0.797);transform-origin:0 0;">24</div>
<div class="a" style="left:1900px;top:222.5px;width:5px;height:1.6px;background:#333"></div>
<div class="a" style="left:1942.9px;top:213.8px;font-size:16.96px;color:#333a42;transform:scaleX(0.876);transform-origin:0 0;">14 Januar 2025</div>
<svg class="a" style="left:2071px;top:217px" width="13" height="15" viewBox="0 0 13 15"><path d="M3 2 L9 7.5 L3 13" stroke="#1a9ae0" stroke-width="3.2" fill="none"/></svg>
<div class="a" style="left:2100.9px;top:210.8px;font-size:18.84px;color:#333a42;transform:scaleX(0.932);transform-origin:0 0;">Skala</div>
<div class="a" style="left:2146.1px;top:210.8px;font-size:18.84px;color:#5a5f66;transform:scaleX(0.960);transform-origin:0 0;">Monat</div>
<div class="a" style="left:2147px;top:236px;width:98px;height:1px;background:#f0f0f0"></div>
<div class="a" style="left:2403px;top:236px;width:73px;height:1px;background:#f0f0f0"></div>
<svg class="a" style="left:2229px;top:218px" width="15" height="9" viewBox="0 0 15 9"><path d="M1.5 1.5 L7.5 7.5 L13.5 1.5" stroke="#777" stroke-width="1.8" fill="none"/></svg>
<div class="a" style="left:2257.4px;top:210.8px;font-size:18.84px;color:#333a42;transform:scaleX(0.943);transform-origin:0 0;">Arbeitseinheit</div>
<div class="a" style="left:2403.2px;top:210.8px;font-size:18.84px;color:#5a5f66;transform:scaleX(0.799);transform-origin:0 0;">%</div>
<svg class="a" style="left:2458px;top:218px" width="15" height="9" viewBox="0 0 15 9"><path d="M1.5 1.5 L7.5 7.5 L13.5 1.5" stroke="#777" stroke-width="1.8" fill="none"/></svg>
<div class="a" style="left:1863px;top:250px;width:613px;height:1px;background:#ececec"></div>
<svg class="a" style="left:2345px;top:275px" width="18" height="13" viewBox="0 0 18 13"><path d="M2.5 10.5 L9 4 L15.5 10.5" stroke="#4ab3ea" stroke-width="2.8" fill="none"/></svg>
<div class="a" style="left:1863px;top:305px;width:525px;height:64px;background:#f6f8fa;border-top:1px solid #ebebeb;border-bottom:1px solid #ebebeb"></div>
<div class="a" style="left:1863px;top:337px;width:525px;height:1px;background:#e4e6e8"></div>
<div class="a" style="left:2239px;top:306px;width:1px;height:63px;background:#e4e6e8"></div>
<div class="a" style="left:1936px;top:337px;width:1px;height:32px;background:#e4e6e8"></div>
<div class="a" style="left:2087px;top:337px;width:1px;height:32px;background:#e4e6e8"></div>
<div class="a" style="left:1980.8px;top:312.8px;font-size:16.00px;color:#333a42;transform:scaleX(0.955);transform-origin:0 0;">Quartal 4</div>
<div class="a" style="left:2283.0px;top:312.8px;font-size:16.00px;color:#333a42;transform:scaleX(0.955);transform-origin:0 0;">Quartal 1</div>
<div class="a" style="left:1828.5px;top:344.0px;font-size:16.00px;color:#333a42;transform:scaleX(0.955);transform-origin:0 0;">Okt 2024</div>
<div class="a" style="left:1979.5px;top:344.0px;font-size:16.00px;color:#333a42;transform:scaleX(0.955);transform-origin:0 0;">Nov 2024</div>
<div class="a" style="left:2130.4px;top:344.0px;font-size:16.00px;color:#333a42;transform:scaleX(0.955);transform-origin:0 0;">Dez 2024</div>
<div class="a" style="left:2283.3px;top:344.0px;font-size:16.00px;color:#333a42;transform:scaleX(0.955);transform-origin:0 0;">Jan 2025</div>
<div class="a" style="left:1863px;top:413px;width:514px;height:44px;background:#e4eefb"></div>
<div class="a" style="left:1800px;top:376px;width:183px;height:22px;background:#82b0f5"></div>
<svg class="a" style="left:1972px;top:397px" width="12" height="11"><path d="M0 0 L11 0 L11 10.5 Z" fill="#82b0f5"/></svg>
<div class="a" style="left:1800px;top:420px;width:576px;height:22px;background:#82b0f5"></div>
<div class="a" style="left:1800px;top:551px;width:576px;height:22px;background:#82b0f5"></div>
<div class="a" style="left:1800px;top:639px;width:576px;height:22px;background:#82b0f5"></div>
<div class="a" style="left:1997px;top:684px;width:379px;height:22px;background:#82b0f5"></div>
<svg class="a" style="left:1997px;top:705px" width="12" height="11"><path d="M0 0 L11 0 L0 10 Z" fill="#82b0f5"/></svg>
<svg class="a" style="left:2366px;top:705px" width="10" height="7"><path d="M0 0 L10 0 L10 6.5 Z" fill="#82b0f5"/></svg>
<div class="a" style="left:2286px;top:369px;width:0;height:389px;border-left:2.4px dashed #f0b020"></div>
<div class="a" style="left:2377px;top:369px;width:11px;height:389px;background:#f1f1f1"></div>
<div class="a" style="left:2378px;top:383px;width:10px;height:319px;background:#c2c2c2"></div>
<svg class="a" style="left:2379px;top:372px" width="9" height="6"><path d="M0.5 5 L4.5 1 L8.5 5 Z" fill="#999"/></svg>
<svg class="a" style="left:2379px;top:746px" width="9" height="6"><path d="M0.5 1 L4.5 5 L8.5 1 Z" fill="#555"/></svg>
<div class="a" style="left:1863px;top:758px;width:525px;height:12px;background:#f1f1f1"></div>
<div class="a" style="left:1863px;top:759.5px;width:487px;height:9px;background:#c2c2c2"></div>
<svg class="a" style="left:2366px;top:760px" width="7" height="9"><path d="M1 1 L5 4.5 L1 8 Z" fill="#444"/></svg>
<div class="a" style="left:1800px;top:779px;width:221px;height:41px;background:#4fc1f3;border-radius:4px"></div>
<div class="a" style="left:2029px;top:779px;width:359px;height:41px;background:#4fc1f3;border-radius:4px"></div>
<div class="a" style="left:2060.2px;top:789.0px;font-size:18.99px;color:#fff;font-weight:bold;transform:scaleX(0.858);transform-origin:0 0;">NICHT PROJEKTBEZOGEN ZUTEILEN</div>
<div class="a" style="left:1801.4px;top:789.0px;font-size:18.99px;color:#fff;font-weight:bold;transform:scaleX(0.858);transform-origin:0 0;">RESSOURCE ZUTEILEN</div>
<div class="a" style="left:1863px;top:825px;width:525px;height:64px;background:#f6f8fa;border-top:1px solid #ebebeb"></div>
<div class="a" style="left:1863px;top:857px;width:525px;height:1px;background:#e4e6e8"></div>
<div class="a" style="left:2062px;top:826px;width:1px;height:63px;background:#e4e6e8"></div>
<div class="a" style="left:1911px;top:857px;width:1px;height:32px;background:#e4e6e8"></div>
<div class="a" style="left:2213px;top:857px;width:1px;height:32px;background:#e4e6e8"></div>
<div class="a" style="left:2364px;top:857px;width:1px;height:32px;background:#e4e6e8"></div>
<div class="a" style="left:1803.6px;top:831.4px;font-size:16.00px;color:#333a42;transform:scaleX(0.955);transform-origin:0 0;">Quartal 3</div>
<div class="a" style="left:2257.8px;top:831.4px;font-size:16.00px;color:#333a42;transform:scaleX(0.955);transform-origin:0 0;">Quartal 4</div>
<div class="a" style="left:1802.3px;top:863.0px;font-size:16.00px;color:#333a42;transform:scaleX(0.955);transform-origin:0 0;">Aug 2024</div>
<div class="a" style="left:1954.0px;top:863.0px;font-size:16.00px;color:#333a42;transform:scaleX(0.955);transform-origin:0 0;">Sep 2024</div>
<div class="a" style="left:2107.0px;top:863.0px;font-size:16.00px;color:#333a42;transform:scaleX(0.955);transform-origin:0 0;">Okt 2024</div>
<div class="a" style="left:2256.4px;top:863.0px;font-size:16.00px;color:#333a42;transform:scaleX(0.955);transform-origin:0 0;">Nov 2024</div>
<div class="a" style="left:1760px;top:889px;width:150.0px;height:40px;background:#2a7db8;box-shadow:inset 0 0 0 1.5px #c84a3a;"></div>
<div class="a" style="left:1802.6px;top:898.9px;font-size:17.39px;color:#f2f7fb;transform:scaleX(1.015);transform-origin:0 0;">98,56 %</div>
<div class="a" style="left:1911.3px;top:889px;width:149.4px;height:40px;background:#2a7db8;"></div>
<div class="a" style="left:1953.6px;top:898.9px;font-size:17.39px;color:#f2f7fb;transform:scaleX(1.015);transform-origin:0 0;">67,24 %</div>
<div class="a" style="left:2063.3px;top:889px;width:148.3px;height:40px;background:#2a7db8;"></div>
<div class="a" style="left:2105.0px;top:898.9px;font-size:17.39px;color:#f2f7fb;transform:scaleX(1.015);transform-origin:0 0;">71,12 %</div>
<div class="a" style="left:2214px;top:889px;width:149.8px;height:40px;background:#2ecc71;"></div>
<div class="a" style="left:2256.5px;top:898.9px;font-size:17.39px;color:#f2f7fb;transform:scaleX(1.015);transform-origin:0 0;">57,48 %</div>
<div class="a" style="left:2365.3px;top:889px;width:22.7px;height:40px;background:#2ecc71;"></div>
<div class="a" style="left:1760px;top:933px;width:150.0px;height:40px;background:#2a7db8;box-shadow:inset 0 0 0 1.5px #c84a3a;"></div>
<div class="a" style="left:1802.6px;top:942.9px;font-size:17.39px;color:#f2f7fb;transform:scaleX(1.015);transform-origin:0 0;">88,24 %</div>
<div class="a" style="left:1911.3px;top:933px;width:149.4px;height:40px;background:#2a7db8;"></div>
<div class="a" style="left:1958.5px;top:942.9px;font-size:17.39px;color:#f2f7fb;transform:scaleX(1.015);transform-origin:0 0;">83,1 %</div>
<div class="a" style="left:2063.3px;top:933px;width:148.3px;height:40px;background:#2a7db8;"></div>
<div class="a" style="left:2109.9px;top:942.9px;font-size:17.39px;color:#f2f7fb;transform:scaleX(1.015);transform-origin:0 0;">92,5 %</div>
<div class="a" style="left:2214px;top:933px;width:149.8px;height:40px;background:#2a7db8;"></div>
<div class="a" style="left:2268.8px;top:942.9px;font-size:17.39px;color:#f2f7fb;transform:scaleX(1.015);transform-origin:0 0;">77 %</div>
<div class="a" style="left:2365.3px;top:933px;width:22.7px;height:40px;background:#2a7db8;"></div>
<div class="a" style="left:1760px;top:977px;width:150.0px;height:40px;background:#2ecc71;"></div>
<div class="a" style="left:1802.6px;top:986.9px;font-size:17.39px;color:#f2f7fb;transform:scaleX(1.015);transform-origin:0 0;">12,45 %</div>
<div class="a" style="left:1911.3px;top:977px;width:149.4px;height:40px;background:#2ecc71;"></div>
<div class="a" style="left:1970.8px;top:986.9px;font-size:17.39px;color:#f2f7fb;transform:scaleX(1.015);transform-origin:0 0;">0 %</div>
<div class="a" style="left:2063.3px;top:977px;width:148.3px;height:40px;background:#2ecc71;"></div>
<div class="a" style="left:2105.0px;top:986.9px;font-size:17.39px;color:#f2f7fb;transform:scaleX(1.015);transform-origin:0 0;">44,87 %</div>
<div class="a" style="left:2214px;top:977px;width:149.8px;height:40px;background:#2a7db8;"></div>
<div class="a" style="left:2256.5px;top:986.9px;font-size:17.39px;color:#f2f7fb;transform:scaleX(1.015);transform-origin:0 0;">73,72 %</div>
<div class="a" style="left:2365.3px;top:977px;width:22.7px;height:40px;background:#2a7db8;"></div>
<div class="a" style="left:1760px;top:1021px;width:150.0px;height:40px;background:#2ecc71;box-shadow:inset 0 0 0 1.5px #c84a3a;"></div>
<div class="a" style="left:1802.6px;top:1030.9px;font-size:17.39px;color:#f2f7fb;transform:scaleX(1.015);transform-origin:0 0;">34,52 %</div>
<div class="a" style="left:1911.3px;top:1021px;width:149.4px;height:40px;background:#2ecc71;"></div>
<div class="a" style="left:1953.6px;top:1030.9px;font-size:17.39px;color:#f2f7fb;transform:scaleX(1.015);transform-origin:0 0;">42,29 %</div>
<div class="a" style="left:2063.3px;top:1021px;width:148.3px;height:40px;background:#2a7db8;"></div>
<div class="a" style="left:2109.9px;top:1030.9px;font-size:17.39px;color:#f2f7fb;transform:scaleX(1.015);transform-origin:0 0;">75,9 %</div>
<div class="a" style="left:2214px;top:1021px;width:149.8px;height:40px;background:#c0392b;"></div>
<div class="a" style="left:2251.6px;top:1030.9px;font-size:17.39px;color:#f2f7fb;transform:scaleX(1.015);transform-origin:0 0;">106,89 %</div>
<div class="a" style="left:2365.3px;top:1021px;width:22.7px;height:40px;background:#2a7db8;"></div>
<svg class="a" style="left:2430px;top:264px" width="20" height="19" viewBox="0 0 26 24"><use href="#ppl"/></svg>
<svg class="a" style="left:2429px;top:321px" width="22" height="22" viewBox="0 0 26 26"><use href="#sp"/></svg>
<div class="a" style="left:2437.5px;top:341.4px;font-size:18.84px;color:#222;transform:scaleX(0.909);transform-origin:0 0;">12</div>
<svg class="a" style="left:2429px;top:377px" width="22" height="22" viewBox="0 0 26 26"><use href="#ex"/></svg>
<div class="a" style="left:2441.0px;top:399.4px;font-size:18.84px;color:#222;transform:scaleX(0.956);transform-origin:0 0;">3</div>
<div class="a" style="left:2375px;top:1212px;width:64px;height:64px;border-radius:50%;background:#4fc1f3;box-shadow:0 2px 14px rgba(0,0,0,0.22)"></div>
<div class="a" style="left:2396px;top:1242px;width:22px;height:4px;background:#fff"></div>
<div class="a" style="left:2405px;top:1233px;width:4px;height:22px;background:#fff"></div>
<div class="a" style="left:0;top:1278px;width:2476px;height:1px;background:#e6e6e6"></div>
<div class="a" style="left:537px;top:201px;width:1326px;height:882px;background:#f5f5f5;box-shadow:0 12px 34px rgba(0,0,0,0.24),0 2px 8px rgba(0,0,0,0.08)"></div>
<div class="a" style="left:537px;top:201px;width:1326px;height:57px;background:#f8f8f8"></div>
<div class="a" style="left:568.2px;top:218.2px;font-size:17.10px;color:#4a4a4a;transform:scaleX(0.903);transform-origin:0 0;">PROJEKT/AKTIVITÄT EINE RESSOURCE ZUTEILEN</div>
<svg class="a" style="left:1814px;top:220px" width="18" height="18" viewBox="0 0 18 18"><path d="M3.5 3.5 L14.5 14.5 M14.5 3.5 L3.5 14.5" stroke="#a2a2a2" stroke-width="3" stroke-linecap="round"/></svg>
<div class="a" style="left:537px;top:258px;width:1326px;height:405px;background:#fff"></div>
<div class="a" style="left:540px;top:338px;width:1323px;height:1px;background:#e2e2e2"></div>
<svg class="a" style="left:539px;top:261px" width="80" height="78" viewBox="0 0 80 78">
<rect x="2.5" y="6" width="76" height="53" rx="5" fill="#f2f2f2" stroke="#111" stroke-width="4"/>
<rect x="4" y="48" width="73" height="10" fill="#a9b3c0"/>
<path d="M4.5 48 L76.5 48" stroke="#111" stroke-width="3"/>
<rect x="30" y="59" width="20" height="10" fill="#8c97a6" stroke="#111" stroke-width="3"/>
<rect x="22" y="68" width="36" height="8" rx="2" fill="#a9b3c0" stroke="#111" stroke-width="3.5"/>
<path d="M9 47 L9 23 L14 13 L19 23 L19 47 Z" fill="#f4b63f" stroke="#111" stroke-width="2.5"/>
<path d="M11.5 18 L14 13 L16.5 18 Z" fill="#111"/>
<rect x="20" y="1.5" width="40" height="36" fill="#3ea3e8" stroke="#111" stroke-width="3"/>
<path d="M21.5 35 L33 20 L40 28 L47 16 L58.5 35 Z" fill="#3dc77a" stroke="#111" stroke-width="2.5" stroke-linejoin="round"/>
<circle cx="51" cy="8.5" r="3" fill="#fff" stroke="#111" stroke-width="2"/>
<rect x="22" y="34" width="36" height="12" fill="#f2f2f2" stroke="#111" stroke-width="2.5"/>
<rect x="30" y="38.5" width="22" height="3" fill="#111"/><circle cx="26" cy="40" r="1.3" fill="#111"/>
<rect x="58" y="10" width="13" height="37" fill="#f4c84a" stroke="#111" stroke-width="2.5"/>
<path d="M58 19 L63 19 M58 27 L63 27 M58 35 L63 35" stroke="#111" stroke-width="2.5"/>
</svg>
<div class="a" style="left:624.5px;top:279.5px;font-size:18.12px;color:#4db3e8;transform:scaleX(0.888);transform-origin:0 0;">Website re-design</div>
<div class="a" style="left:624.5px;top:299.8px;font-size:15.65px;color:#444;transform:scaleX(0.850);transform-origin:0 0;">ITB C1</div>
<div class="a" style="left:768px;top:262px;width:1px;height:76px;background:#ececec"></div>
<div class="a" style="left:824px;top:262px;width:1px;height:76px;background:#ececec"></div>
<div class="a" style="left:863px;top:262px;width:1px;height:76px;background:#ececec"></div>
<div class="a" style="left:982px;top:262px;width:1px;height:76px;background:#ececec"></div>
<div class="a" style="left:1130px;top:262px;width:1px;height:76px;background:#ececec"></div>
<svg class="a" style="left:777px;top:279px" width="41" height="41" viewBox="0 0 41 41"><defs><clipPath id="cm1"><circle cx="20.5" cy="20.5" r="20"/></clipPath></defs><g clip-path="url(#cm1)"><rect width="41" height="41" fill="#f3f3f3"/>
<path d="M3 41 L10 33 L14 41 Z" fill="#6a6a66"/>
<path d="M9.5 18 C9 6 14 2.5 21 2.5 C28 2.5 33 6 32.5 18 Z" fill="#5a3e30"/>
<ellipse cx="21" cy="21" rx="11.5" ry="16.5" fill="#e9ad92"/>
<path d="M10 16 C10 7 15 4.5 21 4.5 C27 4.5 32 7 32 16 C30 10 26 8.5 21 8.5 C16 8.5 12 10 10 16 Z" fill="#5a3e30"/>
<path d="M9.5 24 C10 34 15 39.5 21 39.5 C27 39.5 32 34 32.5 24 C31 30 27 32 21 31 C15 32 11 30 9.5 24 Z" fill="#4a3028"/>
<path d="M14 19 L18 19 M24 19 L28 19" stroke="#5a3028" stroke-width="1.5"/>
<path d="M17.5 33 C19 34.5 23 34.5 24.5 33" stroke="#c07a70" stroke-width="1.4" fill="none"/>
</g></svg>
<div class="a" style="left:832.3px;top:288.2px;font-size:16.23px;color:#444;transform:scaleX(0.840);transform-origin:0 0;">ISD</div>
<div class="a" style="left:871.1px;top:273.3px;font-size:14.49px;color:#444;transform:scaleX(0.926);transform-origin:0 0;">5. Feb 24 - 4. Apr</div>
<div class="a" style="left:871.1px;top:289.8px;font-size:14.49px;color:#444;transform:scaleX(0.926);transform-origin:0 0;">25</div>
<div class="a" style="left:871.1px;top:306.6px;font-size:14.49px;color:#444;transform:scaleX(0.926);transform-origin:0 0;">303 Tage</div>
<div class="a" style="left:1011px;top:281px;width:91px;height:36px;border:1.5px solid #4aa6de;border-radius:4px 4px 10px 4px"></div>
<div class="a" style="left:1022.1px;top:288.9px;font-size:15.94px;color:#3c9bdb;font-weight:bold;transform:scaleX(0.904);transform-origin:0 0;">LAUFEND</div>
<svg class="a" style="left:765px;top:375px" width="14" height="9" viewBox="0 0 14 9"><path d="M1.5 1.5 L7 7 L12.5 1.5" stroke="#a0a0a0" stroke-width="2.2" fill="none"/></svg>
<div class="a" style="left:590.1px;top:386.9px;font-size:17.10px;color:#7a7f84;font-weight:bold;transform:scaleX(0.810);transform-origin:0 0;">RESSOURCE SUCHEN</div>
<div class="a" style="left:591.5px;top:455.9px;font-size:17.83px;color:#5f6367;transform:scaleX(0.918);transform-origin:0 0;">Name</div>
<div class="a" style="left:888.3px;top:455.9px;font-size:17.83px;color:#5f6367;transform:scaleX(0.918);transform-origin:0 0;">Organisationseinheit</div>
<div class="a" style="left:591.2px;top:545.3px;font-size:17.83px;color:#5f6367;transform:scaleX(0.918);transform-origin:0 0;">Ressourcentyp</div>
<div class="a" style="left:888.5px;top:545.3px;font-size:17.83px;color:#5f6367;transform:scaleX(0.918);transform-origin:0 0;">Qualifikation</div>
<div class="a" style="left:888.3px;top:482.9px;font-size:18.26px;color:#3a3a3a;transform:scaleX(0.974);transform-origin:0 0;">Product &amp; Innovation</div>
<div class="a" style="left:591.2px;top:573.7px;font-size:18.26px;color:#3a3a3a;transform:scaleX(0.974);transform-origin:0 0;">Analyst</div>
<div class="a" style="left:888.5px;top:573.7px;font-size:18.26px;color:#3a3a3a;transform:scaleX(0.974);transform-origin:0 0;">IT Skills</div>
<div class="a" style="left:1055px;top:486px;width:1.2px;height:16px;background:#222"></div>
<div class="a" style="left:591px;top:506.5px;width:253px;height:1.5px;background:#777"></div>
<div class="a" style="left:888px;top:507.5px;width:491px;height:1px;background:#b0b0b0"></div>
<div class="a" style="left:888px;top:507px;width:469px;height:1.6px;background:#2a7ac0"></div>
<svg class="a" style="left:1361px;top:490px" width="14" height="9" viewBox="0 0 14 9"><path d="M1.5 1.5 L7 7 L12.5 1.5" stroke="#555" stroke-width="1.8" fill="none"/></svg>
<div class="a" style="left:1384.5px;top:484.5px;width:48px;height:21px;border-radius:11px;background:#2c3e52"></div>
<svg class="a" style="left:1386px;top:485px" width="19" height="19" viewBox="0 0 19 19"><circle cx="9.5" cy="9.5" r="8.5" fill="#dfe4ea"/><path d="M9.5 3.5 L9.5 15.5 M5.5 8.5 C5.5 6.5 7 5.5 9.5 5.5 C12 5.5 13.5 6.5 13.5 8.5 L13.5 12 M5.5 8.5 L5.5 12 M4.5 15.5 L14.5 15.5" stroke="#2b3645" stroke-width="1.5" fill="none"/></svg>
<svg class="a" style="left:1410px;top:488px" width="14" height="14" viewBox="0 0 14 14"><path d="M2.5 2.5 L11.5 11.5 M11.5 2.5 L2.5 11.5" stroke="#fff" stroke-width="2.4" stroke-linecap="round"/></svg>
<div class="a" style="left:591px;top:596px;width:262px;height:1px;background:#b0b0b0"></div>
<svg class="a" style="left:835px;top:580px" width="14" height="9" viewBox="0 0 14 9"><path d="M1.5 1.5 L7 7 L12.5 1.5" stroke="#555" stroke-width="1.8" fill="none"/></svg>
<div class="a" style="left:888px;top:596px;width:548px;height:1px;background:#b0b0b0"></div>
<svg class="a" style="left:1418px;top:580px" width="14" height="9" viewBox="0 0 14 9"><path d="M1.5 1.5 L7 7 L12.5 1.5" stroke="#555" stroke-width="1.8" fill="none"/></svg>
<div class="a" style="left:1748px;top:604px;width:62px;height:27px;border-radius:4px;background:#1a9ad6"></div>
<svg class="a" style="left:1771px;top:609px" width="16" height="16" viewBox="0 0 16 16"><circle cx="6.5" cy="6.5" r="4" stroke="#fff" stroke-width="2.2" fill="none"/><path d="M9.5 9.5 L13 13" stroke="#fff" stroke-width="2.6" stroke-linecap="round"/></svg>
<div class="a" style="left:537px;top:663px;width:1326px;height:7px;background:#ebebeb"></div>
<div class="a" style="left:554.2px;top:690.3px;font-size:18.12px;color:#8c8c8c;font-weight:bold;transform:scaleX(0.849);transform-origin:0 0;">Skala:</div>
<div class="a" style="left:622px;top:698px;width:152px;height:9px;border-radius:4px;background:#dedede;border:1px solid #d2d2d2"></div>
<div class="a" style="left:710px;top:691px;width:20px;height:21px;border-radius:5px;background:#fff;border:1.5px solid #c8c8c8"></div>
<div class="a" style="left:782.7px;top:691.8px;font-size:15.80px;color:#8c8c8c;font-weight:bold;transform:scaleX(0.899);transform-origin:0 0;">Woche</div>
<div class="a" style="left:1640.4px;top:689.8px;font-size:17.54px;color:#333;transform:scaleX(0.960);transform-origin:0 0;">Aufwand in</div>
<div class="a" style="left:1722.3px;top:690.6px;font-size:17.25px;color:#55b3e8;transform:scaleX(0.919);transform-origin:0 0;">Tage</div>
<div class="a" style="left:1721px;top:714px;width:125px;height:1.5px;background:#4aa6de"></div>
<svg class="a" style="left:1837px;top:706px" width="9" height="9"><path d="M8.5 0 L8.5 9 L0 9 Z" fill="#1a8ad6"/></svg>
<div class="a" style="left:552px;top:718px;width:1297px;height:314px;background:#fff"></div>
<div class="a" style="left:552px;top:718px;width:1297px;height:62px;background:#f6f8fa"></div>
<div class="a" style="left:552px;top:780px;width:1297px;height:1px;background:#d9dcdf"></div>
<div class="a" style="left:853px;top:749px;width:996px;height:1px;background:#e4e6e8"></div>
<div class="a" style="left:853px;top:718px;width:1px;height:314px;background:#d9dcdf"></div>
<div class="a" style="left:1156px;top:718px;width:1px;height:62px;background:#e4e6e8"></div>
<div class="a" style="left:1610px;top:718px;width:1px;height:62px;background:#e4e6e8"></div>
<div class="a" style="left:1005px;top:749px;width:1px;height:31px;background:#e4e6e8"></div>
<div class="a" style="left:1308px;top:749px;width:1px;height:31px;background:#e4e6e8"></div>
<div class="a" style="left:1459px;top:749px;width:1px;height:31px;background:#e4e6e8"></div>
<div class="a" style="left:1761px;top:749px;width:1px;height:31px;background:#e4e6e8"></div>
<div class="a" style="left:560.5px;top:739.5px;font-size:17.25px;color:#3d4650;transform:scaleX(0.952);transform-origin:0 0;">Einsatzplanung/Verfügbarkeit</div>
<svg class="a" style="left:784px;top:747px" width="12" height="8"><path d="M1 7 L6 1 L11 7 Z" fill="#8a8a8a"/></svg>
<div class="a" style="left:974.2px;top:723.5px;font-size:15.65px;color:#3d4650;transform:scaleX(0.949);transform-origin:0 0;">Quartal 1</div>
<div class="a" style="left:1352.8px;top:723.5px;font-size:15.65px;color:#3d4650;transform:scaleX(0.949);transform-origin:0 0;">Quartal 2</div>
<div class="a" style="left:1611px;top:718px;width:238px;height:31px;overflow:hidden"><div class="a" style="left:195.6px;top:5.5px;font-size:15.65px;color:#3d4650;transform:scaleX(0.949);transform-origin:0 0;">Quartal 3</div></div>
<div class="a" style="left:898.1px;top:755.5px;font-size:15.80px;color:#3d4650;transform:scaleX(0.941);transform-origin:0 0;">Feb 2024</div>
<div class="a" style="left:1049.6px;top:755.5px;font-size:15.80px;color:#3d4650;transform:scaleX(0.941);transform-origin:0 0;">Mär 2024</div>
<div class="a" style="left:1202.3px;top:755.5px;font-size:15.80px;color:#3d4650;transform:scaleX(0.941);transform-origin:0 0;">Apr 2024</div>
<div class="a" style="left:1352.9px;top:755.5px;font-size:15.80px;color:#3d4650;transform:scaleX(0.941);transform-origin:0 0;">Mai 2024</div>
<div class="a" style="left:1503.9px;top:755.5px;font-size:15.80px;color:#3d4650;transform:scaleX(0.941);transform-origin:0 0;">Jun 2024</div>
<div class="a" style="left:1657.9px;top:755.5px;font-size:15.80px;color:#3d4650;transform:scaleX(0.941);transform-origin:0 0;">Jul 2024</div>
<div class="a" style="left:1762px;top:749px;width:87px;height:31px;overflow:hidden"><div class="a" style="left:43.1px;top:6.5px;font-size:15.80px;color:#3d4650;transform:scaleX(0.941);transform-origin:0 0;">Aug 2024</div></div>
<svg class="a" style="left:559.5px;top:796.5px" width="9" height="12" viewBox="0 0 10 14"><use href="#tri"/></svg>
<svg class="a" style="left:578px;top:788px" width="30" height="30" viewBox="0 0 30 30"><defs><clipPath id="av578_788"><circle cx="15" cy="15" r="15"/></clipPath></defs><g clip-path="url(#av578_788)"><rect width="30" height="30" fill="#c9c0b6"/><path d="M4 30 C5 26 9 25 15 25 C21 25 25 26 26 30 Z" fill="#d8d2ca"/><ellipse cx="15" cy="15" rx="8" ry="10" fill="#6a4532"/><path d="M7.3 12 C7 5 10.5 3 15 3 C19.5 3 23 5 22.7 12 C21 8 18 7 15 7 C12 7 9 8 7.3 12 Z" fill="#2a1c16"/><path d="M11 13.5 L13 13.5 M17 13.5 L19 13.5" stroke="#1a100c" stroke-width="1.2"/><path d="M12.5 20.5 C14 21 16 21 17.5 20.5" stroke="#3a2018" stroke-width="1" fill="none"/></g></svg>
<div class="a" style="left:600px;top:781px;width:253px;height:40px;overflow:hidden"><div class="a" style="left:12.8px;top:9.6px;font-size:19.28px;color:#2e3a46;transform:scaleX(0.906);transform-origin:0 0;">Abdel Torres | Technician / 56%</div></div>
<div class="a" style="left:854.3px;top:781px;width:149.5px;height:40px;background:#2a7db8;overflow:hidden;"><div class="a" style="left:57.5px;top:12.6px;font-size:15.94px;color:#eef5fa;transform:scaleX(0.922);transform-origin:0 0;">80 %</div></div>
<div class="a" style="left:1006.3px;top:781px;width:148.5px;height:40px;background:#2a7db8;overflow:hidden;"><div class="a" style="left:57.5px;top:12.6px;font-size:15.94px;color:#eef5fa;transform:scaleX(0.922);transform-origin:0 0;">80 %</div></div>
<div class="a" style="left:1157px;top:781px;width:150.0px;height:40px;background:#2ecc71;overflow:hidden;"><div class="a" style="left:57.5px;top:12.6px;font-size:15.94px;color:#eef5fa;transform:scaleX(0.922);transform-origin:0 0;">33 %</div></div>
<div class="a" style="left:1309px;top:781px;width:149.0px;height:40px;background:#2ecc71;overflow:hidden;"><div class="a" style="left:57.5px;top:12.6px;font-size:15.94px;color:#eef5fa;transform:scaleX(0.922);transform-origin:0 0;">24 %</div></div>
<div class="a" style="left:1460px;top:781px;width:149.5px;height:40px;background:#2ecc71;overflow:hidden;"><div class="a" style="left:57.5px;top:12.6px;font-size:15.94px;color:#eef5fa;transform:scaleX(0.922);transform-origin:0 0;">28 %</div></div>
<div class="a" style="left:1611.5px;top:781px;width:148.5px;height:40px;background:#2ecc71;overflow:hidden;"><div class="a" style="left:57.5px;top:12.6px;font-size:15.94px;color:#eef5fa;transform:scaleX(0.922);transform-origin:0 0;">28 %</div></div>
<div class="a" style="left:1762px;top:781px;width:87.0px;height:40px;overflow:hidden"><div class="a" style="left:0;top:0;width:150px;height:40px;background:#2ecc71;"><div class="a" style="left:57.5px;top:12.6px;font-size:15.94px;color:#eef5fa;transform:scaleX(0.922);transform-origin:0 0;">37 %</div></div></div>
<svg class="a" style="left:559.5px;top:840.5px" width="9" height="12" viewBox="0 0 10 14"><use href="#tri"/></svg>
<svg class="a" style="left:578px;top:832px" width="30" height="30" viewBox="0 0 30 30"><defs><clipPath id="av578_832"><circle cx="15" cy="15" r="15"/></clipPath></defs><g clip-path="url(#av578_832)"><rect width="30" height="30" fill="#a8bccd"/><path d="M6 28 C5 14 8 3 15 3 C22 3 25 14 24 28 Z" fill="#1f1614"/><path d="M2 30 C3 25 9 23 15 23 C21 23 27 25 28 30 Z" fill="#6a88a6"/><path d="M12 23 L15 30 L18 23 Z" fill="#f0f0f0"/><ellipse cx="15" cy="14" rx="5.5" ry="7.5" fill="#e9c3a8"/><path d="M9.5 12 C9.5 6.5 12 5 15 5 C18 5 20.5 6.5 20.5 12 C19 8.5 17 8 15 8 C13 8 11 8.5 9.5 12 Z" fill="#1f1614"/><path d="M12.8 17.5 C14 18.5 16 18.5 17.2 17.5" stroke="#fff" stroke-width="1" fill="none"/><circle cx="13" cy="13.5" r="0.75" fill="#2a1a14"/><circle cx="17" cy="13.5" r="0.75" fill="#2a1a14"/></g></svg>
<div class="a" style="left:600px;top:825px;width:253px;height:40px;overflow:hidden"><div class="a" style="left:12.8px;top:9.6px;font-size:19.28px;color:#2e3a46;transform:scaleX(0.906);transform-origin:0 0;">Alice Hubert | Technician / 85%</div></div>
<div class="a" style="left:854.3px;top:825px;width:149.5px;height:40px;background:#2ecc71;overflow:hidden;"><div class="a" style="left:57.5px;top:12.6px;font-size:15.94px;color:#eef5fa;transform:scaleX(0.922);transform-origin:0 0;">30 %</div></div>
<div class="a" style="left:1006.3px;top:825px;width:148.5px;height:40px;background:#2ecc71;overflow:hidden;"><div class="a" style="left:57.5px;top:12.6px;font-size:15.94px;color:#eef5fa;transform:scaleX(0.922);transform-origin:0 0;">30 %</div></div>
<div class="a" style="left:1157px;top:825px;width:150.0px;height:40px;background:#2ecc71;overflow:hidden;"><div class="a" style="left:57.5px;top:12.6px;font-size:15.94px;color:#eef5fa;transform:scaleX(0.922);transform-origin:0 0;">30 %</div></div>
<div class="a" style="left:1309px;top:825px;width:149.0px;height:40px;background:#2ecc71;overflow:hidden;"><div class="a" style="left:57.5px;top:12.6px;font-size:15.94px;color:#eef5fa;transform:scaleX(0.922);transform-origin:0 0;">30 %</div></div>
<div class="a" style="left:1460px;top:825px;width:149.5px;height:40px;background:#2ecc71;overflow:hidden;"><div class="a" style="left:57.5px;top:12.6px;font-size:15.94px;color:#eef5fa;transform:scaleX(0.922);transform-origin:0 0;">36 %</div></div>
<div class="a" style="left:1611.5px;top:825px;width:148.5px;height:40px;background:#2ecc71;overflow:hidden;"><div class="a" style="left:57.5px;top:12.6px;font-size:15.94px;color:#eef5fa;transform:scaleX(0.922);transform-origin:0 0;">24 %</div></div>
<div class="a" style="left:1762px;top:825px;width:87.0px;height:40px;overflow:hidden"><div class="a" style="left:0;top:0;width:150px;height:40px;background:#2ecc71;"><div class="a" style="left:61.6px;top:12.6px;font-size:15.94px;color:#eef5fa;transform:scaleX(0.922);transform-origin:0 0;">0 %</div></div></div>
<svg class="a" style="left:559.5px;top:884.5px" width="9" height="12" viewBox="0 0 10 14"><use href="#tri"/></svg>
<svg class="a" style="left:578px;top:876px" width="30" height="30" viewBox="0 0 30 30"><defs><clipPath id="av578_876"><circle cx="15" cy="15" r="15"/></clipPath></defs><g clip-path="url(#av578_876)"><rect width="30" height="30" fill="#e7cca9"/><path d="M6 30 C6 14 8 4 15 4 C22 4 24 14 24 30 Z" fill="#6a4630"/><path d="M5 30 C6 26 10 24.5 15 24.5 C20 24.5 24 26 25 30 Z" fill="#4a2e22"/><ellipse cx="15" cy="14.5" rx="6" ry="8.3" fill="#ecc6a6"/><path d="M9 13 C9 7 11.5 5.5 15 5.5 C18.5 5.5 21 7 21 13 C19.5 9.5 17.5 8.5 15 8.5 C12.5 8.5 10.5 9.5 9 13 Z" fill="#6a4630"/><path d="M12.5 18.5 C14 19.6 16 19.6 17.5 18.5" stroke="#fff" stroke-width="1" fill="none"/><circle cx="12.8" cy="14" r="0.75" fill="#2a1a14"/><circle cx="17.2" cy="14" r="0.75" fill="#2a1a14"/></g></svg>
<div class="a" style="left:600px;top:869px;width:253px;height:40px;overflow:hidden"><div class="a" style="left:12.8px;top:9.6px;font-size:19.28px;color:#2e3a46;transform:scaleX(0.906);transform-origin:0 0;">Amina Righi | Developer / 32%</div></div>
<div class="a" style="left:854.3px;top:869px;width:149.5px;height:40px;background:#2ecc71;overflow:hidden;"><div class="a" style="left:57.5px;top:12.6px;font-size:15.94px;color:#eef5fa;transform:scaleX(0.922);transform-origin:0 0;">32 %</div></div>
<div class="a" style="left:1006.3px;top:869px;width:148.5px;height:40px;background:#2ecc71;overflow:hidden;"><div class="a" style="left:57.5px;top:12.6px;font-size:15.94px;color:#eef5fa;transform:scaleX(0.922);transform-origin:0 0;">53 %</div></div>
<div class="a" style="left:1157px;top:869px;width:150.0px;height:40px;background:#2a7db8;overflow:hidden;"><div class="a" style="left:57.5px;top:12.6px;font-size:15.94px;color:#eef5fa;transform:scaleX(0.922);transform-origin:0 0;">86 %</div></div>
<div class="a" style="left:1309px;top:869px;width:149.0px;height:40px;background:#2a7db8;overflow:hidden;"><div class="a" style="left:57.5px;top:12.6px;font-size:15.94px;color:#eef5fa;transform:scaleX(0.922);transform-origin:0 0;">90 %</div></div>
<div class="a" style="left:1460px;top:869px;width:149.5px;height:40px;background:#2ecc71;overflow:hidden;"><div class="a" style="left:57.5px;top:12.6px;font-size:15.94px;color:#eef5fa;transform:scaleX(0.922);transform-origin:0 0;">26 %</div></div>
<div class="a" style="left:1611.5px;top:869px;width:148.5px;height:40px;background:#c0392b;overflow:hidden;"><div class="a" style="left:53.5px;top:12.6px;font-size:15.94px;color:#eef5fa;transform:scaleX(0.922);transform-origin:0 0;">133 %</div></div>
<div class="a" style="left:1762px;top:869px;width:87.0px;height:40px;overflow:hidden"><div class="a" style="left:0;top:0;width:150px;height:40px;background:#2a7db8;box-shadow:inset 0 0 0 1.5px #c84a3a;"><div class="a" style="left:57.5px;top:12.6px;font-size:15.94px;color:#eef5fa;transform:scaleX(0.922);transform-origin:0 0;">82 %</div></div></div>
<svg class="a" style="left:559.5px;top:928.5px" width="9" height="12" viewBox="0 0 10 14"><use href="#tri"/></svg>
<svg class="a" style="left:578px;top:920px" width="30" height="30" viewBox="0 0 30 30"><defs><clipPath id="av578_920"><circle cx="15" cy="15" r="15"/></clipPath></defs><g clip-path="url(#av578_920)"><rect width="30" height="30" fill="#efe9da"/><path d="M2 26 C1 12 6 2 16 2 C24 2 28 8 28 16 L26 16 C25 9 21 6 16 6 C10 6 8 14 8 26 Z" fill="#e2b869"/><path d="M6 30 C9 26 14 25 20 25 C25 25 28 27 29 30 Z" fill="#232323"/><ellipse cx="17" cy="15.5" rx="8" ry="9.5" fill="#ebbd9c"/><path d="M9.5 12 C10 7 13 5.5 17 5.5 C22 5.5 25 8 25 12 C22 9 20 8.5 17 8.5 C14 8.5 11.5 9.5 9.5 12 Z" fill="#e2b869"/><path d="M14 20 C15.5 21.3 18.5 21.3 20 20" stroke="#a55a50" stroke-width="1" fill="none"/><path d="M2 26 L8 26 L8 30 L2 30 Z" fill="#e2b869"/><circle cx="14.5" cy="14.5" r="0.75" fill="#2a1a14"/><circle cx="19.5" cy="14.5" r="0.75" fill="#2a1a14"/></g></svg>
<div class="a" style="left:600px;top:913px;width:253px;height:40px;overflow:hidden"><div class="a" style="left:12.8px;top:9.6px;font-size:19.28px;color:#2e3a46;transform:scaleX(0.906);transform-origin:0 0;">Amy Roberts | Specialized Engineer / 40%</div></div>
<div class="a" style="left:854.3px;top:913px;width:149.5px;height:40px;background:#2a7db8;overflow:hidden;"><div class="a" style="left:57.5px;top:12.6px;font-size:15.94px;color:#eef5fa;transform:scaleX(0.922);transform-origin:0 0;">93 %</div></div>
<div class="a" style="left:1006.3px;top:913px;width:148.5px;height:40px;background:#2a7db8;overflow:hidden;"><div class="a" style="left:57.5px;top:12.6px;font-size:15.94px;color:#eef5fa;transform:scaleX(0.922);transform-origin:0 0;">96 %</div></div>
<div class="a" style="left:1157px;top:913px;width:150.0px;height:40px;background:#2a7db8;overflow:hidden;"><div class="a" style="left:57.5px;top:12.6px;font-size:15.94px;color:#eef5fa;transform:scaleX(0.922);transform-origin:0 0;">98 %</div></div>
<div class="a" style="left:1309px;top:913px;width:149.0px;height:40px;background:#2a7db8;overflow:hidden;box-shadow:inset 0 0 0 1.5px #c84a3a;"><div class="a" style="left:57.5px;top:12.6px;font-size:15.94px;color:#eef5fa;transform:scaleX(0.922);transform-origin:0 0;">99 %</div></div>
<div class="a" style="left:1460px;top:913px;width:149.5px;height:40px;background:#2a7db8;overflow:hidden;"><div class="a" style="left:57.5px;top:12.6px;font-size:15.94px;color:#eef5fa;transform:scaleX(0.922);transform-origin:0 0;">96 %</div></div>
<div class="a" style="left:1611.5px;top:913px;width:148.5px;height:40px;background:#2ecc71;overflow:hidden;"><div class="a" style="left:57.5px;top:12.6px;font-size:15.94px;color:#eef5fa;transform:scaleX(0.922);transform-origin:0 0;">58 %</div></div>
<div class="a" style="left:1762px;top:913px;width:87.0px;height:40px;overflow:hidden"><div class="a" style="left:0;top:0;width:150px;height:40px;background:#2ecc71;"><div class="a" style="left:57.5px;top:12.6px;font-size:15.94px;color:#eef5fa;transform:scaleX(0.922);transform-origin:0 0;">48 %</div></div></div>
<svg class="a" style="left:559.5px;top:972.5px" width="9" height="12" viewBox="0 0 10 14"><use href="#tri"/></svg>
<svg class="a" style="left:578px;top:964px" width="30" height="30" viewBox="0 0 30 30"><defs><clipPath id="av578_964"><circle cx="15" cy="15" r="15"/></clipPath></defs><g clip-path="url(#av578_964)"><rect width="30" height="30" fill="#4c4050"/><circle cx="24" cy="6" r="1" fill="#8a7a8a"/><circle cx="26" cy="16" r="1.2" fill="#7a6a7a"/><path d="M3 22 C2 10 7 3 14.5 3 C22 3 25 9 24 20 C23 24 20 26 16 26 C10 26 4 26 3 22 Z" fill="#e3bd78"/><path d="M4 30 C5 25 10 23 16 23 C22 23 26 25 27 30 Z" fill="#f3dede"/><path d="M11 23 L17 30" stroke="#4a3a30" stroke-width="1.6"/><ellipse cx="15.5" cy="14.5" rx="5.5" ry="7.5" fill="#f2d0b0"/><path d="M10 12 C10 7 12 6 15.5 6 C19 6 21 8 21 12 C19 9 17 8.5 15.5 8.5 C13 8.5 11.5 9.5 10 12 Z" fill="#e3bd78"/><path d="M13.3 18 C14.5 19 16.5 19 17.7 18" stroke="#fff" stroke-width="1" fill="none"/><circle cx="13.5" cy="14" r="0.75" fill="#2a1a14"/><circle cx="17.5" cy="14" r="0.75" fill="#2a1a14"/></g></svg>
<div class="a" style="left:600px;top:957px;width:253px;height:40px;overflow:hidden"><div class="a" style="left:12.8px;top:9.6px;font-size:19.28px;color:#2e3a46;transform:scaleX(0.906);transform-origin:0 0;">Anna Karina | Designer / 24%</div></div>
<div class="a" style="left:854.3px;top:957px;width:149.5px;height:40px;background:#2ecc71;overflow:hidden;"><div class="a" style="left:57.5px;top:12.6px;font-size:15.94px;color:#eef5fa;transform:scaleX(0.922);transform-origin:0 0;">54 %</div></div>
<div class="a" style="left:1006.3px;top:957px;width:148.5px;height:40px;background:#2a7db8;overflow:hidden;"><div class="a" style="left:57.5px;top:12.6px;font-size:15.94px;color:#eef5fa;transform:scaleX(0.922);transform-origin:0 0;">76 %</div></div>
<div class="a" style="left:1157px;top:957px;width:150.0px;height:40px;background:#2a7db8;overflow:hidden;"><div class="a" style="left:57.5px;top:12.6px;font-size:15.94px;color:#eef5fa;transform:scaleX(0.922);transform-origin:0 0;">81 %</div></div>
<div class="a" style="left:1309px;top:957px;width:149.0px;height:40px;background:#2a7db8;overflow:hidden;"><div class="a" style="left:57.5px;top:12.6px;font-size:15.94px;color:#eef5fa;transform:scaleX(0.922);transform-origin:0 0;">69 %</div></div>
<div class="a" style="left:1460px;top:957px;width:149.5px;height:40px;background:#2ecc71;overflow:hidden;"><div class="a" style="left:57.5px;top:12.6px;font-size:15.94px;color:#eef5fa;transform:scaleX(0.922);transform-origin:0 0;">16 %</div></div>
<div class="a" style="left:1611.5px;top:957px;width:148.5px;height:40px;background:#c0392b;overflow:hidden;"><div class="a" style="left:53.5px;top:12.6px;font-size:15.94px;color:#eef5fa;transform:scaleX(0.922);transform-origin:0 0;">121 %</div></div>
<div class="a" style="left:1762px;top:957px;width:87.0px;height:40px;overflow:hidden"><div class="a" style="left:0;top:0;width:150px;height:40px;background:#2a7db8;box-shadow:inset 0 0 0 1.5px #c84a3a;"><div class="a" style="left:57.5px;top:12.6px;font-size:15.94px;color:#eef5fa;transform:scaleX(0.922);transform-origin:0 0;">82 %</div></div></div>
<div class="a" style="left:552px;top:1019px;width:1297px;height:13px;background:#f1f1f1;border-bottom:1px solid #dcdcdc"></div>
<div class="a" style="left:853px;top:1019px;width:4px;height:13px;background:#fff"></div>
<div class="a" style="left:566px;top:1021px;width:201px;height:10px;background:#c2c2c2"></div>
<div class="a" style="left:867px;top:1021px;width:533px;height:10px;background:#c2c2c2"></div>
<svg class="a" style="left:556px;top:1022px" width="6" height="8"><path d="M5 0.5 L1 4 L5 7.5 Z" fill="#999"/></svg>
<svg class="a" style="left:845px;top:1022px" width="6" height="8"><path d="M1 0.5 L5 4 L1 7.5 Z" fill="#333"/></svg>
<svg class="a" style="left:860px;top:1022px" width="6" height="8"><path d="M5 0.5 L1 4 L5 7.5 Z" fill="#999"/></svg>
<svg class="a" style="left:1841px;top:1022px" width="6" height="8"><path d="M1 0.5 L5 4 L1 7.5 Z" fill="#333"/></svg>
<svg class="a" style="left:575px;top:1044px" width="16" height="17" viewBox="0 0 16 17"><path d="M2.8 1.5 L2.8 15.5" stroke="#7ec5f0" stroke-width="2.6"/><path d="M13.5 2.5 L7 8.5 L13.5 14.5" stroke="#7ec5f0" stroke-width="3.2" fill="none"/></svg>
<svg class="a" style="left:619px;top:1044px" width="13" height="17" viewBox="0 0 13 17"><path d="M10 2.5 L4 8.5 L10 14.5" stroke="#7ec5f0" stroke-width="3.2" fill="none"/></svg>
<div class="a" style="left:658.2px;top:1041.8px;font-size:15.36px;color:#8c8c8c;transform:scaleX(0.959);transform-origin:0 0;">Seite</div>
<div class="a" style="left:714.5px;top:1036.5px;width:40.5px;height:28px;background:#fff;border-bottom:1.2px solid #c8c8c8;border-radius:3px"></div>
<div class="a" style="left:742.0px;top:1039.0px;font-size:18.41px;color:#555;transform:scaleX(0.803);transform-origin:0 0;">1</div>
<div class="a" style="left:766.3px;top:1041.8px;font-size:15.36px;color:#8c8c8c;transform:scaleX(0.951);transform-origin:0 0;">/ 12</div>
<svg class="a" style="left:823px;top:1044px" width="13" height="17" viewBox="0 0 13 17"><path d="M3 2.5 L9 8.5 L3 14.5" stroke="#1a9ae0" stroke-width="3.2" fill="none"/></svg>
<svg class="a" style="left:864px;top:1044px" width="16" height="17" viewBox="0 0 16 17"><path d="M2.5 2.5 L9 8.5 L2.5 14.5" stroke="#1a9ae0" stroke-width="3.2" fill="none"/><path d="M13.2 1.5 L13.2 15.5" stroke="#1a9ae0" stroke-width="2.6"/></svg>
<div class="a" style="left:1731.4px;top:1041.4px;font-size:16.38px;color:#9a9a9a;transform:scaleX(0.921);transform-origin:0 0;">Seiten: 1 - 5 / 58</div>
</body></html>
